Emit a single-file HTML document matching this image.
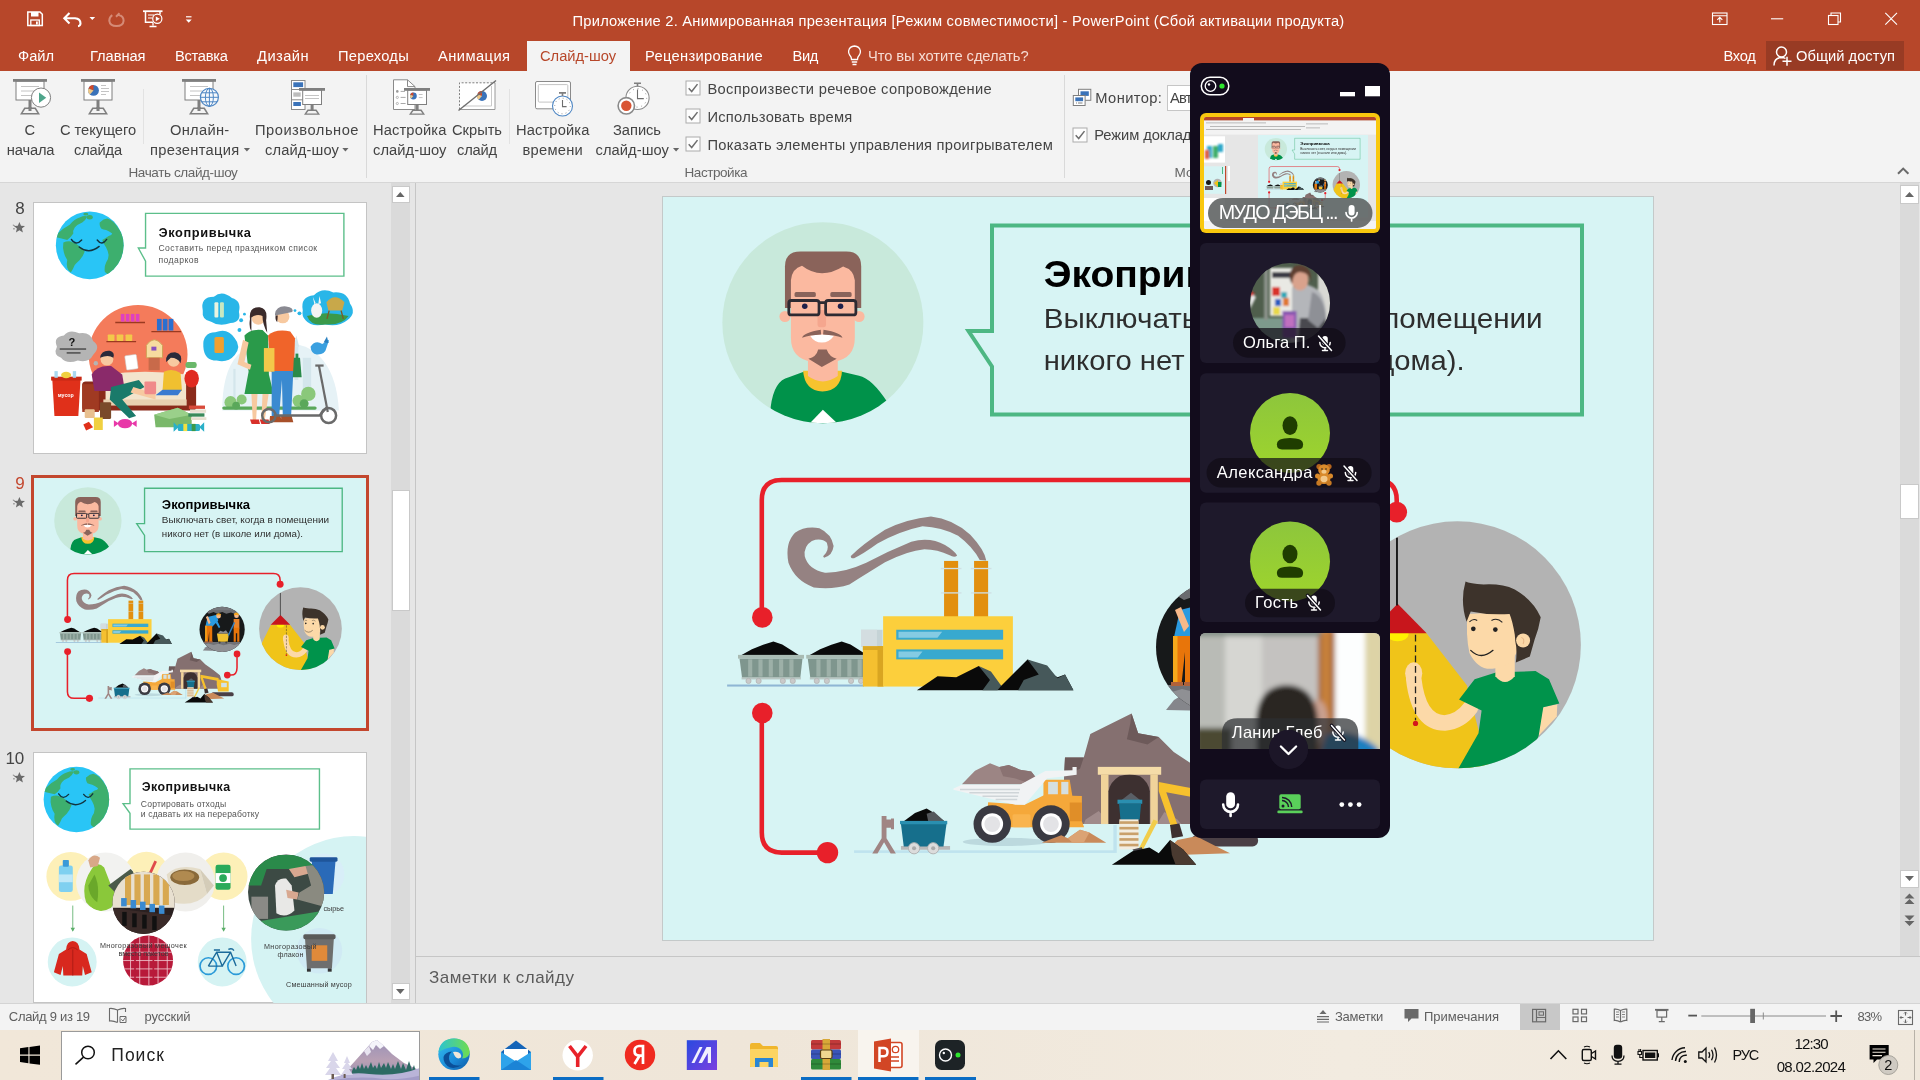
<!DOCTYPE html>
<html lang="ru"><head><meta charset="utf-8"><title>PowerPoint</title>
<style>
html,body{margin:0;padding:0;}
body{will-change:transform;width:1920px;height:1080px;overflow:hidden;position:relative;background:#e6e6e6;font-family:"Liberation Sans",sans-serif;}
.a{position:absolute;}
.t{position:absolute;white-space:nowrap;line-height:1;font-size:14.7px;color:#444;}
.w{color:#fff;}
svg{position:absolute;overflow:visible;}
#hdr{left:0;top:0;width:1920px;height:71px;background:#b7472a;}
#rib{left:0;top:71px;width:1920px;height:111px;background:#f3f3f3;border-bottom:1px solid #d6d6d6;}
.cb{position:absolute;width:13px;height:13px;border:1px solid #ababab;background:#fdfdfd;}
.r{font-size:14.7px;color:#444;}
.g{font-size:13.5px;color:#666;}
.s{font-size:13px;color:#5e5e5e;}
.sep{position:absolute;width:1px;background:#d9d9d9;}
</style></head><body>

<!--S9DEF-->
<svg width="0" height="0" style="position:absolute"><defs>
<symbol id="s9" viewBox="0 0 991 744" overflow="hidden">
 <rect width="991" height="744" fill="#d7f4f4"></rect>
 <!-- avatar -->
 <g transform="translate(48,14) scale(0.21296)">
  <clipPath id="avc"><circle cx="530" cy="529" r="472"></circle></clipPath>
  <circle cx="530" cy="529" r="472" fill="#c8e9db"></circle>
  <g clip-path="url(#avc)">
   <path d="M285 925 Q300 800 370 785 L440 760 L620 760 L700 778 Q760 790 835 905 L835 1010 L285 1010Z" fill="#00924a"></path>
   <path d="M437 755 L620 755 Q615 850 528 852 Q445 850 437 755Z" fill="#f7c32e"></path>
   <path d="M460 690 L600 690 L600 780 Q530 830 460 780Z" fill="#fbb9a0"></path>
   <path d="M470 1000 L530 938 L596 1000Z" fill="#fff"></path>
   <circle cx="352" cy="500" r="26" fill="#fbb9a0"></circle><circle cx="700" cy="500" r="26" fill="#fbb9a0"></circle>
   <path d="M352 460 L352 265 Q352 195 425 195 L640 195 Q710 195 710 265 L710 460Z" fill="#8a635a"></path>
   <path d="M380 330 Q385 275 432 262 Q520 330 625 265 Q675 280 680 330 L680 600 Q680 700 580 712 L480 712 Q380 700 380 600Z" fill="#fbb9a0"></path>
   <rect x="505" y="470" width="40" height="80" rx="12" fill="#f5a68e"></rect>
   <rect x="397" y="385" width="100" height="24" rx="8" fill="#8a635a"></rect><rect x="565" y="385" width="100" height="24" rx="8" fill="#8a635a"></rect>
   <circle cx="445" cy="452" r="13" fill="#20204a"></circle><circle cx="613" cy="452" r="13" fill="#20204a"></circle>
   <g fill="none" stroke="#2d2a32" stroke-width="13"><rect x="370" y="425" width="142" height="68" rx="12"></rect><rect x="543" y="425" width="142" height="68" rx="12"></rect><path d="M512 435H543"></path></g>
   <path d="M470 590 Q525 580 582 590 Q560 622 525 622 Q490 622 470 590Z" fill="#fff"></path>
   <path d="M432 600 Q440 575 520 562 L522 585 Q470 588 432 600Z M622 600 Q615 575 533 562 L531 585 Q585 588 622 600Z" fill="#8a635a"></path>
   <path d="M508 655 L548 655 Q560 690 595 698 L525 737 L462 698 Q500 690 508 655Z" fill="#8a635a"></path>
  </g>
 </g>
 <!-- callout -->
 <path d="M330 29.5 H920 V218.5 H330 V170.5 L306.5 135 H330 Z" fill="none" stroke="#4db783" stroke-width="4" stroke-linejoin="miter"></path>
 <!-- red connectors -->
 <g fill="none" stroke="#e8202a" stroke-width="4.6">
  <path d="M99.8 421 V304 Q99.8 284 119.8 284 H714.7 Q734.7 284 734.7 304 V316"></path>
  <path d="M99.8 517 V636.6 Q99.8 656.6 119.8 656.6 H165"></path>
  <path d="M606 524 V565 Q606 587 588 587 H577"></path>
 </g>
 <g fill="#e8202a"><circle cx="100.3" cy="421.4" r="10.3"></circle><circle cx="734.7" cy="316.2" r="10.4"></circle><circle cx="100.3" cy="517" r="10.3"></circle><circle cx="165.5" cy="656.6" r="10.7"></circle><circle cx="606" cy="524" r="10"></circle><circle cx="577" cy="587" r="10"></circle></g>
 <!-- factory -->
 <g transform="translate(58,304) scale(0.1875)">
  <path d="M550 300 Q585 270 570 228 Q540 200 490 218 Q445 245 452 300 Q470 370 560 388 Q660 390 780 335 Q900 270 1020 222 Q1120 195 1200 240 Q1250 270 1265 296 Q1250 310 1225 295 Q1160 262 1090 262 Q1000 270 880 332 Q770 400 690 450 Q600 480 500 466 Q400 430 365 335 Q345 230 400 175 Q450 138 530 150 Q595 180 606 245 Q600 295 555 308Z" fill="#958282"></path>
  <path d="M698 298 Q760 235 880 158 Q1000 100 1125 88 Q1240 100 1335 185 Q1410 265 1420 322 L1385 320 Q1350 250 1270 190 Q1180 145 1080 140 Q960 165 840 232 Q760 290 715 310 Q695 312 698 298Z" fill="#958282"></path>
  <rect x="38" y="984" width="730" height="11" fill="#8fb6d4"></rect>
  <g id="car">
   <path d="M115 826 L170 796 L230 772 L285 755 L332 770 L372 796 L420 826Z" fill="#0a0a0a"></path>
   <path d="M104 845 L440 845 L428 950 L118 950Z" fill="#7f968e"></path>
   <g fill="#9db0a8"><rect x="150" y="850" width="22" height="92"></rect><rect x="205" y="850" width="22" height="92"></rect><rect x="260" y="850" width="22" height="92"></rect><rect x="315" y="850" width="22" height="92"></rect><rect x="370" y="850" width="22" height="92"></rect></g>
   <rect x="96" y="826" width="352" height="20" fill="#a9bbb3"></rect>
   <rect x="115" y="945" width="316" height="12" fill="#b9c7c3"></rect>
   <g fill="#c9c9c9" stroke="#aaa" stroke-width="3"><circle cx="152" cy="965" r="14"></circle><circle cx="206" cy="965" r="14"></circle><circle cx="335" cy="965" r="14"></circle><circle cx="388" cy="965" r="14"></circle></g>
  </g>
  <use href="#car" x="364"></use>
  <rect x="752" y="692" width="115" height="90" fill="#c5d3d6"></rect><rect x="752" y="692" width="85" height="90" fill="#d3dde0"></rect>
  <rect x="762" y="780" width="110" height="215" fill="#f5c030"></rect><rect x="840" y="780" width="32" height="215" fill="#d9a521"></rect><rect x="762" y="780" width="110" height="20" fill="#dca822"></rect>
  <rect x="1195" y="325" width="75" height="300" fill="#e28f0e"></rect><rect x="1355" y="325" width="75" height="300" fill="#e28f0e"></rect>
  <g fill="#cfe0e4"><rect x="1178" y="362" width="110" height="7"></rect><rect x="1178" y="492" width="110" height="7"></rect><rect x="1338" y="362" width="110" height="7"></rect><rect x="1338" y="492" width="110" height="7"></rect></g>
  <rect x="870" y="620" width="692" height="375" fill="#fccf3c"></rect>
  <rect x="940" y="692" width="570" height="53" fill="#38a9cf"></rect><rect x="940" y="797" width="570" height="53" fill="#38a9cf"></rect>
  <path d="M952 703 H1185 L1160 735 H952Z M952 808 H1080 L1055 840 H952Z" fill="#85cbe3"></path>
  <path d="M1050 1015 L1160 940 L1260 945 L1380 885 L1430 935 L1500 990 L1640 850 L1700 880 L1800 945 L1840 930 L1885 1015Z" fill="#0a0a0a"></path>
  <path d="M1380 885 L1445 915 L1500 990 L1480 1015 L1400 1015 L1440 960Z M1640 850 L1745 882 L1800 950 L1840 930 L1885 1015 L1590 1015 L1620 960 L1700 930Z" fill="#46585a"></path>
 </g>
 <!-- mine -->
 <g transform="translate(178,494) scale(0.1875)">
  <path d="M1190 715 L1195 460 L1200 360 L1300 360 L1335 235 L1555 125 L1590 230 L1700 250 L1780 330 L1900 410 L2010 500 L2075 715Z" fill="#857070"></path>
  <path d="M1555 125 L1590 230 L1700 250 L1640 290 L1530 262 L1548 180Z M1200 360 L1300 360 L1280 420 L1195 460Z" fill="#6d5a5a"></path>
  <path d="M1300 715 L1310 690 L1380 645 L1440 715Z M1690 715 L1730 650 L1800 690 L1820 715Z" fill="#a08b8b"></path>
  <ellipse cx="880" cy="810" rx="225" ry="22" fill="#bcd9de"></ellipse>
  <rect x="75" y="855" width="1390" height="14" fill="#bfe3ee"></rect>
  <path d="M1458 869 L1458 720 L1476 720 L1476 869Z" fill="#bfe3ee"></path>
  <path d="M222 672 H248 V690 H272 V685 H288 V742 H272 V735 H248 V790 L298 872 H270 L235 812 L200 872 H172 L222 790Z" fill="#a08583"></path>
  <rect x="325" y="832" width="262" height="20" fill="#b8b8b8"></rect>
  <path d="M342 698 L400 656 L462 632 L500 655 L555 698Z" fill="#0a0a0a"></path><path d="M462 660 L500 648 L555 698 L470 698Z" fill="#55585c"></path>
  <path d="M325 715 L568 715 L552 834 L340 834Z" fill="#166f8c"></path><rect x="320" y="698" width="252" height="18" fill="#2a8fb0"></rect>
  <g fill="#dcdcdc" stroke="#b0b0b0" stroke-width="5"><circle cx="395" cy="844" r="30"></circle><circle cx="497" cy="844" r="30"></circle></g><g fill="#aaa"><circle cx="395" cy="844" r="11"></circle><circle cx="497" cy="844" r="11"></circle></g>
  <path d="M650 502 L720 430 L800 390 L850 410 L900 400 L960 425 L1020 435 L1048 470 L965 502Z" fill="#9c8584"></path>
  <path d="M850 410 L900 400 L960 425 L1020 435 L1048 470 L990 490 L930 470 L870 460Z" fill="#8a7272"></path>
  <path d="M790 598 L985 612 L1090 560 L1290 565 L1290 700 L1302 732 L780 732Z" fill="#f5a83a"></path>
  <path d="M1085 478 H1225 L1240 570 H1085Z" fill="#f5a83a"></path><rect x="1110" y="490" width="52" height="66" fill="#d5dfe0"></rect><rect x="1180" y="490" width="38" height="66" fill="#d5dfe0"></rect>
  <path d="M1225 600 H1290 V700 H1225Z" fill="#e08e28"></path><rect x="920" y="662" width="96" height="70" rx="8" fill="#f9b44e"></rect>
  <path d="M605 525 L650 505 L960 505 L1095 432 L1240 428 L1240 410 L1262 410 L1262 452 L1180 462 L1105 470 L985 612 L935 612 L605 532Z" fill="#f1f3f4"></path>
  <path d="M640 530 H960 M690 548 H955 M760 566 H950 M830 584 H945" stroke="#cfd5d8" stroke-width="8"></path>
  <g><circle cx="812" cy="715" r="100" fill="#3a3a42"></circle><circle cx="812" cy="715" r="58" fill="#fff"></circle><circle cx="812" cy="715" r="42" fill="#e3e3e6"></circle><circle cx="1125" cy="715" r="100" fill="#3a3a42"></circle><circle cx="1125" cy="715" r="58" fill="#fff"></circle><circle cx="1125" cy="715" r="42" fill="#e3e3e6"></circle></g>
  <path d="M1075 815 L1180 775 L1215 790 L1280 745 L1330 760 L1420 815Z" fill="#c98a5a"></path><path d="M1215 790 L1280 745 L1330 760 L1300 815 L1240 815Z" fill="#dba374"></path>
  <rect x="1375" y="410" width="338" height="42" fill="#f5dca8"></rect><rect x="1392" y="450" width="40" height="265" fill="#f0d39a"></rect><rect x="1655" y="450" width="40" height="265" fill="#f0d39a"></rect>
  <path d="M1432 715 L1432 540 Q1440 490 1490 460 Q1545 445 1600 460 Q1645 490 1652 540 L1652 715Z" fill="#3d3030"></path>
  <path d="M1500 588 L1552 548 L1602 588Z" fill="#5a5f66"></path><rect x="1480" y="585" width="132" height="22" fill="#2a8fb0"></rect><path d="M1488 605 H1606 L1598 692 H1496Z" fill="#166f8c"></path>
  <rect x="1490" y="690" width="102" height="160" fill="#f3ede0"></rect><g fill="#c9a06a"><rect x="1490" y="700" width="102" height="14"></rect><rect x="1490" y="730" width="102" height="14"></rect><rect x="1490" y="760" width="102" height="14"></rect><rect x="1490" y="790" width="102" height="14"></rect><rect x="1490" y="820" width="102" height="14"></rect></g>
  <!-- excavator -->
  <path d="M1700 490 L1990 545 L1985 590 L1740 545 L1800 720 L1765 728 L1700 540Z" fill="#f7c12d"></path>
  <path d="M1960 560 L2150 600 L2150 760 L1980 760 L1960 650Z" fill="#f7c12d"></path><rect x="2030" y="620" width="90" height="70" fill="#cfe3ea"></rect>
  <rect x="1875" y="772" width="355" height="62" rx="30" fill="#4a3f45"></rect>
  <path d="M1760 720 L1810 712 L1830 780 L1770 790Z" fill="#3d3030"></path>
  <path d="M1672 690 L1695 700 L1605 872 L1585 862Z" fill="#f1cd4a"></path><path d="M1560 850 L1610 838 L1622 880 L1590 900Z" fill="#4a4a50"></path>
  <path d="M1740 860 L1800 800 L1900 780 L2000 830 L2080 870 L1800 880Z" fill="#c98a5a"></path>
  <path d="M1450 932 L1560 860 L1650 840 L1700 870 L1760 800 L1830 850 L1900 932Z" fill="#0a0a0a"></path><path d="M1760 800 L1830 850 L1900 932 L1790 932 L1770 880Z" fill="#4a3a30"></path>
 </g>
 <!-- miners circle -->
 <g>
  <clipPath id="mnc"><circle cx="561.5" cy="451" r="67.5"></circle></clipPath>
  <path d="M504 514 L512 504 L522 498 L545 500 L552 515Z" fill="#85868b"></path>
  <circle cx="561.5" cy="451" r="67.5" fill="#17191a"></circle>
  <g clip-path="url(#mnc)">
   <rect x="480" y="378" width="160" height="18" fill="#77787c"></rect><path d="M490 396 l10 5 l12 -3 l10 6 l14 -5 l10 4 l16 -4 l12 5 l14 -4 l12 5 l12 -5 l10 3 V394 H490Z" fill="#6a6b6f"></path>
   <rect x="480" y="489" width="160" height="30" fill="#8f9094"></rect><path d="M480 489 h160 v5 l-12 3 l-14 -4 l-16 4 l-14 -3 l-18 4 l-16 -4 l-14 3 l-16 -4 l-14 4 l-12 -3 l-14 3z" fill="#707176"></path>
   <path d="M546 463 h36 l-4 25 h-28z" fill="#f2c230"></path><path d="M548 463 l8 -8 l9 3 l8 -5 l7 10z" fill="#8a8a8e"></path><circle cx="554" cy="490" r="3" fill="#444"></circle><circle cx="574" cy="490" r="3" fill="#444"></circle>
   <path d="M512 441 L518 414 L546 407 L550 424 L532 443Z" fill="#2a9ae0"></path>
   <path d="M511 488 V440 H532 V488 H523 V456 L519.500 488Z" fill="#e8750a"></path><path d="M511 488 V440 h4.500 V488z" fill="#f5a81c"></path>
   <rect x="509" y="486" width="12" height="4" fill="#b0623a"></rect><rect x="522" y="486" width="11" height="4" fill="#b0623a"></rect>
   <path d="M513 414 L519 411 L527 430 L522 436Z" fill="#f7b98a"></path>
   <circle cx="551" cy="411" r="7" fill="#f7b98a"></circle><path d="M543.500 409 a8 8 0 0 1 15.500 -1z" fill="#f5a623"></path>
   <path d="M545 421 L556 444 L552 447 L540 427Z" fill="#2a9ae0"></path>
   <path d="M596 420 h17 v28 h-17z" fill="#e8822a"></path><path d="M596 488 V446 h17 V488 h-6.500 V462 h-4 V488Z" fill="#e8750a"></path>
   <circle cx="604.500" cy="410" r="7" fill="#f7b98a"></circle><path d="M596.500 408 a8 8 0 0 1 16 0z" fill="#f5a623"></path>
   <path d="M597 428 L578 468 L582 470 L600 432Z" fill="#2e7fc4"></path>
  </g>
 </g>
 <!-- right circle: boy & lamp -->
 <g transform="translate(718,304) scale(0.2592)">
  <clipPath id="byc"><circle cx="298.5" cy="558.5" r="476.5"></circle></clipPath>
  <circle cx="298.5" cy="558.5" r="476.5" fill="#b3b3b3"></circle>
  <g clip-path="url(#byc)">
   <path d="M-42 512 L178 512 L335 715 L420 1040 L-300 1040Z" fill="#f0c419"></path>
   <ellipse cx="68" cy="518" rx="42" ry="27" fill="#fff200"></ellipse>
   <path d="M68 400 L180 514 L-44 514Z" fill="#c8161c"></path>
   <rect x="62" y="145" width="7" height="262" fill="#111"></rect>
   <path d="M628 800 L684 788 L682 835 L612 910Z" fill="#fcd9a8"></path>
   <path d="M130 690 Q150 860 250 860 Q310 855 350 800" fill="none" stroke="#fcd9a8" stroke-width="60" stroke-linecap="round"></path>
   <ellipse cx="130" cy="668" rx="33" ry="42" fill="#fcd9a8"></ellipse>
   <path d="M305 770 L365 692 L450 665 L600 660 L652 692 L692 785 L630 800 L612 910 L560 1040 L300 1040 L380 900 L392 812Z" fill="#00934b"></path>
   <path d="M445 600 H520 V680 Q482 725 445 680Z" fill="#fcd9a8"></path>
   
   <path d="M338 440 Q330 520 345 590 Q380 660 440 650 Q520 640 535 560 L540 430Z" fill="#fcd9a8"></path>
   <path d="M330 314 Q345 322 400 326 Q470 322 520 345 Q590 385 620 452 Q612 500 596 540 L578 604 L524 627 Q530 580 522 545 L520 520 Q512 470 500 440 Q420 445 350 430 L334 470 Q308 390 330 314Z" fill="#3d332b"></path>
   <circle cx="552" cy="542" r="27" fill="#fcd9a8"></circle><path d="M545 530 Q560 535 552 556" fill="none" stroke="#e8b888" stroke-width="4"></path>
   <path d="M137 520 V850" stroke="#222" stroke-width="5" stroke-dasharray="26 14"></path><circle cx="137" cy="862" r="10" fill="#d4161c"></circle>
   <circle cx="360" cy="497" r="9" fill="#222"></circle><circle cx="445" cy="500" r="9" fill="#222"></circle>
   <path d="M350 580 Q390 620 436 580" fill="none" stroke="#222" stroke-width="5" stroke-linecap="round"></path>
   <path d="M345 470 Q360 455 375 465 M430 465 Q452 452 472 472" fill="none" stroke="#222" stroke-width="4"></path>
  </g>
 </g>
 <!-- text -->
 <text x="381.7" y="91.4" font-family="Liberation Sans, sans-serif" font-weight="bold" font-size="36.5" fill="#000" textLength="263" lengthAdjust="spacingAndGlyphs">Экопривычка</text>
 <text x="381.7" y="132" font-family="Liberation Sans, sans-serif" font-size="28" fill="#2e2e2e" textLength="499" lengthAdjust="spacingAndGlyphs">Выключать свет, когда в помещении</text>
 <text x="381.7" y="173.6" font-family="Liberation Sans, sans-serif" font-size="28" fill="#2e2e2e" textLength="421" lengthAdjust="spacingAndGlyphs">никого нет (в школе или дома).</text>
</symbol>
</defs></svg>
<!--/S9DEF-->
<!-- ===== HEADER ===== -->
<div id="hdr" class="a"></div>
<div class="a" style="left:527px;top:41px;width:103px;height:31px;background:#f3f3f3;"></div>
<div class="a" style="left:1766px;top:41px;width:138px;height:29px;background:#983b24;"></div>

<div class="t w" style="left: 572.5px; top: 13.5px;  letter-spacing: 0.232px;">Приложение 2. Анимированная презентация [Режим совместимости] - PowerPoint (Сбой активации продукта)</div>

<div class="t w" style="left: 18px; top: 48.5px;  letter-spacing: -0.027px;">Файл</div>
<div class="t w" style="left: 90px; top: 48.5px;  letter-spacing: -0.058px;">Главная</div>
<div class="t w" style="left: 175px; top: 48.5px;  letter-spacing: -0.299px;">Вставка</div>
<div class="t w" style="left: 257px; top: 48.5px;  letter-spacing: 0.438px;">Дизайн</div>
<div class="t w" style="left: 338px; top: 48.5px;  letter-spacing: 0.264px;">Переходы</div>
<div class="t w" style="left: 438px; top: 48.5px;  letter-spacing: 0.443px;">Анимация</div>
<div class="t" style="left: 540px; top: 48.5px;  color: rgb(183, 71, 42); letter-spacing: -0.017px;">Слайд-шоу</div>
<div class="t w" style="left: 645px; top: 48.5px;  letter-spacing: 0.327px;">Рецензирование</div>
<div class="t w" style="left: 792.5px; top: 48.5px;  letter-spacing: -0.359px;">Вид</div>
<div class="t w" style="left: 868px; top: 48.5px;  color: rgb(246, 220, 212); letter-spacing: -0.085px;">Что вы хотите сделать?</div>
<div class="t w" style="left: 1723.5px; top: 48.5px;  letter-spacing: -0.309px;">Вход</div>
<div class="t w" style="left: 1796px; top: 48.5px;  letter-spacing: 0.026px;">Общий доступ</div>


<svg class="a" style="left:0;top:0" width="1920" height="71">
 <g fill="none" stroke="#fff" stroke-width="1.5">
  <path d="M27.800 12 H40 L42.300 14.300 V25.500 H27.800Z"></path><rect x="31" y="12" width="7.500" height="4.500" fill="#fff" stroke="none"></rect><rect x="30.800" y="20" width="8.500" height="5.500" stroke-width="1.300"></rect><rect x="36" y="21.500" width="1.800" height="3" fill="#fff" stroke="none"></rect>
  <path d="M69.500 13 L64.300 18.300 L69.500 23.600 M64.800 18.300 H75 Q80.500 18.800 80.500 23.500 Q80.300 26 78 26.200" stroke-width="2.100"></path>
  <path d="M119.500 13.200 L116 16.800 M118.500 15 Q123.600 16 123.600 20.800 Q123 26 116.500 26 Q110 26 109.300 20.800 Q109.300 17 112.300 15.200" stroke="#d58b77" stroke-width="2"></path>
  <path d="M143 11.200 H162.500" stroke-width="1.800"></path><path d="M145.500 12 V22.300 H153"></path><path d="M160 12 V14.500"></path><path d="M148 15 H154 M148 18 H152" stroke-width="1"></path><circle cx="157.300" cy="18.800" r="4.600" stroke-width="1.200"></circle><path d="M155.800 16.400 L159.800 18.800 L155.800 21.200Z" fill="#fff" stroke="none"></path><path d="M153 22.500 V25.500 M149.500 26.500 H156.500" stroke-width="1.300"></path>
  <path d="M186 16.800 H191.500" stroke-width="1.200"></path>
 </g>
 <path d="M89.500 17 h5.600 l-2.800 3z M185.700 19.500 h6 l-3 3.300z" fill="#fff"></path>
 <!-- lightbulb -->
 <g fill="none" stroke="#fff" stroke-width="1.300"><path d="M851.500 59.500 Q851.500 57 849.800 55.300 Q848.300 53.300 848.600 51 Q849.500 46.300 854.500 46 Q859.500 46.300 860.400 51 Q860.700 53.300 859.200 55.300 Q857.500 57 857.500 59.500Z"></path><path d="M851.800 62 H857.200 M852.500 64.500 H856.500"></path></g>
 <!-- share person -->
 <g fill="none" stroke="#fff" stroke-width="1.500"><circle cx="1781.500" cy="52" r="5"></circle><path d="M1774 65.500 Q1774 58 1781 57.500 Q1784 57.500 1785.500 58.500"></path><path d="M1782.500 61.300 H1791.500 M1787 56.800 V65.800"></path></g>
 <!-- window controls -->
 <g fill="none" stroke="#fff" stroke-width="1.100">
  <rect x="1712.500" y="13" width="14.500" height="11.500"></rect><path d="M1712.500 15.800 H1727 M1719.800 22.500 V17.500 M1717.300 19.800 L1719.800 17.300 L1722.300 19.800"></path>
  <path d="M1771 18.800 H1783.200"></path>
  <rect x="1828.500" y="15.500" width="9.500" height="9"></rect><path d="M1831 15.500 V13 H1840.500 V22 H1838"></path>
  <path d="M1885.300 12.800 L1897 24.600 M1897 12.800 L1885.300 24.600"></path>
 </g>
</svg>
<!-- ===== RIBBON ===== -->
<div id="rib" class="a"></div>
<svg width="0" height="0" style="position:absolute">
 <defs>
  <g id="stand"><!-- big presentation stand, origin = top-left of top bar, 34 wide -->
   <rect x="3" y="2" width="28" height="19" fill="#fff" stroke="#7f7f7f" stroke-width="1"></rect>
   <rect x="0" y="0" width="34" height="2.8" fill="#7f7f7f"></rect>
   <rect x="15.5" y="21" width="3" height="9" fill="#7f7f7f"></rect>
   <path d="M11.3 28.5 L22.7 28.5 L27 35.5 L7 35.5 Z" fill="#7f7f7f"></path>
   <path d="M12.3 30 L21.7 30 L24.3 34 L9.7 34 Z" fill="#f3f3f3"></path>
   <rect x="15.5" y="28" width="3" height="4" fill="#7f7f7f"></rect>
  </g>
  <g id="sstand"><!-- small stand, 26 wide -->
   <rect x="3.7" y="2" width="18.8" height="14.5" fill="#fff" stroke="#7f7f7f" stroke-width="1"></rect>
   <rect x="0" y="0" width="26" height="2.8" fill="#7f7f7f"></rect>
   <rect x="11.6" y="16.5" width="3" height="6.5" fill="#7f7f7f"></rect>
   <path d="M8.5 21.5 L17.5 21.5 L21 26.8 L5 26.8 Z" fill="#7f7f7f"></path>
   <path d="M9.4 23 L16.6 23 L18.5 25.5 L7.5 25.5 Z" fill="#f3f3f3"></path>
  </g>
  <g id="pie"><!-- r=5.4 at 0,0 -->
   <circle r="5.4" fill="#3b73b9"></circle>
   <path d="M0 0 L0 -5.4 A5.4 5.4 0 0 0 -5 -2 Z" fill="#d04a2b"></path>
   <path d="M0 0 L-5 -2 A5.4 5.4 0 0 0 -3.6 4 Z" fill="#f0c987"></path>
  </g>
  <g id="chk"><path d="M3.2 7.8 L6.2 11 L12 3.6" fill="none" stroke="#6e6e6e" stroke-width="1.5"></path></g>
 </defs>
</svg>
<svg class="a" style="left:0;top:0" width="1200" height="190">
 <!-- 1: С начала -->
 <use href="#stand" x="13" y="79"></use>
 <g stroke="#c4c4c4" stroke-width="1"><path d="M21 86.5H39M21 91H39M21 95.5H33"></path></g>
 <circle cx="41" cy="97.6" r="9.6" fill="#fff" stroke="#7f7f7f" stroke-width="1"></circle>
 <path d="M39 92.6 L46.2 97.8 L39 103 Z" fill="#4fa58b"></path>
 <!-- 2: С текущего -->
 <use href="#stand" x="81" y="79"></use>
 <use href="#pie" x="93.5" y="90.4"></use>
 <g stroke="#c4c4c4" stroke-width="1"><path d="M101 85.5H106M101 88.5H109M101 91.5H109M101 94.5H106"></path></g>
 <!-- 3: Онлайн -->
 <use href="#stand" x="182" y="79"></use>
 <g stroke="#c4c4c4" stroke-width="1"><path d="M190 86.5H208M190 91H202M190 95.5H200"></path></g>
 <circle cx="209.4" cy="97.3" r="9" fill="#f6f9fc" stroke="#4f87c4" stroke-width="1.2"></circle>
 <g fill="none" stroke="#4f87c4" stroke-width="1"><ellipse cx="209.4" cy="97.3" rx="4" ry="9"></ellipse><path d="M200.4 97.3H218.4M209.4 88.3V106.3M201.6 92.8H217.2M201.6 101.8H217.2"></path></g>
 <!-- 4: Произвольное -->
 <rect x="291.5" y="80.5" width="13.5" height="29" fill="#fff" stroke="#8a8a8a"></rect>
 <path d="M291.5 89.5H305M291.5 99.8H305" stroke="#8a8a8a"></path>
 <rect x="293.3" y="82.3" width="9.8" height="4.8" fill="#3b73b9"></rect>
 <rect x="293.3" y="92.4" width="7.4" height="4.3" fill="#bdbdbd"></rect>
 <rect x="293.3" y="102" width="7.6" height="4" fill="#3b73b9"></rect>
 <use href="#sstand" x="299" y="88"></use>
 <g stroke="#c4c4c4" stroke-width="1"><path d="M305 95.5H319M305 98.5H319"></path></g>
 <!-- 5: Настройка слайд-шоу -->
 <path d="M393.5 79.8 H407.5 L415 86.6 V109.5 H393.5 Z" fill="#fff" stroke="#8a8a8a"></path>
 <path d="M407.5 79.8 V86.6 H415" fill="none" stroke="#8a8a8a"></path>
 <circle cx="397.3" cy="91.4" r="1.3" fill="#9a9a9a"></circle><circle cx="397.3" cy="97.4" r="1.1" fill="#fff" stroke="#9a9a9a" stroke-width=".7"></circle><circle cx="397.3" cy="103.5" r="1.1" fill="#fff" stroke="#9a9a9a" stroke-width=".7"></circle>
 <path d="M400.6 91.4H405M400.6 97.4H405.6M400.6 103.5H405.6" stroke="#a8a8a8"></path>
 <use href="#sstand" x="404" y="88"></use>
 <g transform="translate(413.4 96) scale(.63)"><use href="#pie"></use></g>
 <path d="M418.8 94.5H422.6M418.8 97.6H422.6" stroke="#c4c4c4"></path>
 <!-- 6: Скрыть слайд -->
 <rect x="459.5" y="82.8" width="35.5" height="26.8" fill="#fff"></rect>
 <path d="M459.5 109.5 V82.8 H495" fill="none" stroke="#7f7f7f" stroke-width="1" stroke-dasharray="2 1.6"></path>
 <path d="M459.5 109.5 H495 V82.8" fill="none" stroke="#9a9a9a" stroke-width="1"></path>
 <path d="M463 106 H491.5 V86" fill="none" stroke="#c9c9c9" stroke-width="1"></path>
 <g transform="translate(482 96) scale(.93)"><use href="#pie"></use></g>
 <path d="M458.5 110.5 L496 80.5" stroke="#6e6e6e" stroke-width="1.4"></path>
 <!-- 7: Настройка времени -->
 <rect x="535.5" y="81.5" width="35" height="27.3" rx="1.5" fill="#fff" stroke="#8a8a8a"></rect>
 <rect x="538.3" y="84.6" width="29.5" height="17.5" rx="1" fill="#fff" stroke="#c4c4c4"></rect>
 <circle cx="562.5" cy="106" r="10" fill="#fff" stroke="#4f87c4" stroke-width="1.1"></circle>
 <path d="M559 92.9 H566 M562.5 93 V96" stroke="#7f7f7f" stroke-width="1.6" fill="none"></path>
 <path d="M562.5 100 V106.6 H566.6" stroke="#6e6e6e" stroke-width="1.1" fill="none"></path>
 <circle cx="562.5" cy="106" r="7.8" fill="none" stroke="#8a8a8a" stroke-width="1" stroke-dasharray=".9 3.18"></circle>
 <!-- 8: Запись -->
 <circle cx="637.5" cy="97.9" r="11.6" fill="#fff" stroke="#8a8a8a" stroke-width="1.1"></circle>
 <path d="M634 83.3 H641 M637.5 83.5 V86.6" stroke="#7f7f7f" stroke-width="1.6" fill="none"></path>
 <path d="M637.5 89.5 V98.6 H643.8" stroke="#6e6e6e" stroke-width="1.1" fill="none"></path>
 <circle cx="637.5" cy="97.9" r="9.2" fill="none" stroke="#8a8a8a" stroke-width="1" stroke-dasharray=".9 3.9"></circle>
 <circle cx="626.3" cy="105.8" r="8.2" fill="#fff" stroke="#8a8a8a" stroke-width="1.6"></circle>
 <circle cx="626.3" cy="105.8" r="5.2" fill="#d95433"></circle>
 <!-- dropdown arrows -->
 <g fill="#666"><path d="M243.8 148 h6.2 l-3.1 3.4z"></path><path d="M342.3 148 h6.2 l-3.1 3.4z"></path><path d="M673 148 h6.2 l-3.1 3.4z"></path></g>
 <!-- checks -->
 <g fill="#fdfdfd" stroke="#ababab"><rect x="686" y="81" width="14" height="14"></rect><rect x="686" y="109" width="14" height="14"></rect><rect x="686" y="137" width="14" height="14"></rect><rect x="1073" y="128" width="14" height="14"></rect></g>
 <use href="#chk" x="685.5" y="80.5"></use><use href="#chk" x="685.5" y="108.5"></use><use href="#chk" x="685.5" y="136.5"></use><use href="#chk" x="1072.5" y="127.5"></use>
 <!-- monitor icon -->
 <rect x="1078.5" y="89.3" width="12.3" height="11" fill="#fff" stroke="#7f7f7f"></rect><rect x="1080.5" y="91.3" width="8.3" height="4.6" fill="#3b73b9"></rect>
 <rect x="1073.3" y="95.5" width="11.8" height="10" fill="#fff" stroke="#7f7f7f"></rect><rect x="1075.3" y="97.4" width="7.8" height="3.8" fill="#3b73b9"></rect><path d="M1076 103H1077M1078 103H1082.5" stroke="#7f7f7f"></path>
 <!-- collapse caret -->
</svg>
<div class="sep" style="left:143px;top:89px;height:55px;background:#e2e2e2"></div>
<div class="sep" style="left:366px;top:75px;height:103px;"></div>
<div class="sep" style="left:509px;top:89px;height:55px;background:#e2e2e2"></div>
<div class="sep" style="left:1064px;top:75px;height:103px;"></div>
<div class="a" style="left:1167px;top:85px;width:60px;height:26px;background:#fff;border:1px solid #c6c6c6;box-sizing:border-box"></div>

<div class="t r" style="left: 24.5px; top: 122.6px;  letter-spacing: 0.891px;">С</div>
<div class="t r" style="left: 6.8px; top: 142.6px;  letter-spacing: -0.172px;">начала</div>
<div class="t r" style="left: 60px; top: 122.6px;  letter-spacing: -0.066px;">С текущего</div>
<div class="t r" style="left: 74px; top: 142.6px;  letter-spacing: -0.172px;">слайда</div>
<div class="t r" style="left: 170px; top: 122.6px;  letter-spacing: 0.288px;">Онлайн-</div>
<div class="t r" style="left: 150px; top: 142.6px;  letter-spacing: 0.307px;">презентация</div>
<div class="t r" style="left: 255px; top: 122.6px;  letter-spacing: 0.5px;">Произвольное</div>
<div class="t r" style="left: 265px; top: 142.6px;  letter-spacing: 0.123px;">слайд-шоу</div>
<div class="t r" style="left: 373px; top: 122.6px;  letter-spacing: 0.132px;">Настройка</div>
<div class="t r" style="left: 373px; top: 142.6px;  letter-spacing: 0.068px;">слайд-шоу</div>
<div class="t r" style="left: 452px; top: 122.6px;  letter-spacing: -0.023px;">Скрыть</div>
<div class="t r" style="left: 457px; top: 142.6px;  letter-spacing: -0.172px;">слайд</div>
<div class="t r" style="left: 516px; top: 122.6px;  letter-spacing: 0.132px;">Настройка</div>
<div class="t r" style="left: 522.5px; top: 142.6px;  letter-spacing: 0.252px;">времени</div>
<div class="t r" style="left: 613px; top: 122.6px;  letter-spacing: -0.034px;">Запись</div>
<div class="t r" style="left: 595.5px; top: 142.6px;  letter-spacing: 0.068px;">слайд-шоу</div>
<div class="t r" style="left: 707.5px; top: 81.6px;  letter-spacing: 0.326px;">Воспроизвести речевое сопровождение</div>
<div class="t r" style="left: 707.5px; top: 109.6px;  letter-spacing: 0.234px;">Использовать время</div>
<div class="t r" style="left: 707.5px; top: 137.6px;  letter-spacing: 0.233px;">Показать элементы управления проигрывателем</div>
<div class="t r" style="left: 1095.3px; top: 91.4px;  letter-spacing: 0.391px;">Монитор:</div>
<div class="t r" style="left: 1170px; top: 91.4px;  letter-spacing: -0.839px;">Авт</div>
<div class="t r" style="left: 1094.3px; top: 128.3px;  letter-spacing: -0.083px;">Режим доклад</div>
<div class="t g" style="left: 128.5px; top: 166px;  letter-spacing: -0.386px;">Начать слайд-шоу</div>
<div class="t g" style="left: 684.5px; top: 166px;  letter-spacing: -0.441px;">Настройка</div>
<div class="t g" style="left:1174.5px;top:166px;">Мо</div>
<svg class="a" style="left:1897px;top:167px" width="12" height="8"><path d="M1 6.800 L6.200 1.600 L11.400 6.800" fill="none" stroke="#6a6a6a" stroke-width="2"></path></svg>

<!-- ===== LEFT PANEL FRAME ===== -->
<div class="a" style="left:391px;top:183px;width:19px;height:820px;background:#dadada;"></div>
<div class="a" style="left:414.5px;top:183px;width:1px;height:820px;background:#c6c6c6;"></div>
<div class="a" style="left:391.5px;top:185.5px;width:18px;height:17.5px;background:#fff;border:1px solid #c9c9c9;box-sizing:border-box"></div>
<div class="a" style="left:391.5px;top:489.5px;width:18px;height:121px;background:#fff;border:1px solid #c9c9c9;box-sizing:border-box"></div>
<div class="a" style="left:391.5px;top:982.5px;width:18px;height:17.5px;background:#fff;border:1px solid #c9c9c9;box-sizing:border-box"></div>
<svg class="a" style="left:0;top:0" width="420" height="1010">
 <path d="M396 197 l4.3 -5 l4.3 5z M396 989 l4.3 5 l4.3 -5z" fill="#666"></path>
 <g fill="#6a6a6a"><path id="star" d="M19.4 222 l1.6 3.7 4 .3 -3.1 2.6 1 3.9 -3.5 -2.2 -3.5 2.2 1 -3.9 -3.1 -2.6 4 -.3z M13 224.6 l1.8 .8 l-.3 .7 l-1.8 -.8z M13 228.4 h1.900 v.8 h-1.900z"></path><use href="#star" y="275"></use><use href="#star" y="550"></use></g>
</svg>
<div class="t" style="left:15.2px;top:200.3px;font-size:17px;color:#444;">8</div>
<div class="t" style="left:15.2px;top:475.3px;font-size:17px;color:#c3472e;">9</div>
<div class="t" style="left:5.5px;top:750.3px;font-size:17px;color:#444;letter-spacing:-.3px">10</div>

<!-- thumbnails -->
<div class="a" id="th8" style="left:33px;top:202px;width:334px;height:252px;background:#fff;border:1px solid #c4c4c4;box-sizing:border-box;overflow:hidden"></div>
<div class="a" style="left:31px;top:475px;width:338px;height:256px;background:#c3472e;"></div>
<div class="a" id="th9" style="left:34px;top:478px;width:332px;height:250px;background:#d7f4f4;overflow:hidden"><svg style="left:0;top:0" width="332" height="250"><use href="#s9" width="332" height="250"></use></svg></div>
<div class="a" id="th10" style="left:33px;top:752px;width:334px;height:251px;background:#fff;border:1px solid #c4c4c4;box-sizing:border-box;overflow:hidden"></div>

<!--TH-->
<svg class="a" style="left:0;top:0" width="420" height="1010">
 <defs>
  <clipPath id="c8"><rect x="34" y="203" width="332" height="249"></rect></clipPath>
  <clipPath id="c10"><rect x="34" y="753" width="332" height="250"></rect></clipPath>
  <g id="earth"><!-- r=122 at 0,0 in zoom units -->
   <circle r="122" fill="#29c5f6"></circle>
   <clipPath id="ec"><circle r="122"></circle></clipPath>
   <g clip-path="url(#ec)" fill="#3daf6e">
    <path d="M-125 -35 L-113 -44 Q-95 -62 -72 -74 Q-55 -95 -36 -100 Q-20 -108 -9 -104 Q-15 -90 -27 -82 Q-45 -75 -54 -64 Q-62 -52 -59 -42 Q-68 -28 -81 -19 Q-100 -25 -125 -30Z"></path>
    <ellipse cx="0" cy="-101" rx="11" ry="8"></ellipse><ellipse cx="-14" cy="-112" rx="9" ry="5"></ellipse>
    <path d="M36 -82 Q50 -95 63 -96 Q82 -90 95 -73 Q112 -52 122 -28 L126 26 Q120 60 108 80 Q96 100 81 108 Q62 106 54 94 Q52 76 59 62 Q68 50 68 35 Q66 20 59 8 Q50 -6 45 -19 Q56 -24 68 -33 Q80 -36 81 -42 Q70 -50 59 -55 Q48 -56 41 -60 Q34 -70 36 -82Z"></path>
    <path d="M-95 -10 Q-82 -16 -68 -14 Q-50 -8 -36 4 Q-24 12 -18 22 Q-24 40 -36 53 Q-46 62 -54 71 Q-60 86 -68 98 Q-78 92 -81 80 Q-84 66 -81 53 Q-90 40 -93 26 Q-98 8 -95 -10Z"></path>
   </g>
   <g fill="none" stroke="#12343f" stroke-width="5" stroke-linecap="round"><path d="M-66 -21 Q-50 4 -29 -19"></path><path d="M27 -19 Q44 4 61 -21"></path><path d="M-38 6 Q-2 34 34 4"></path></g>
  </g>
 </defs>
 <!-- ============ thumb 8 ============ -->
 <g clip-path="url(#c8)"><g transform="translate(0,180) scale(0.27778)">
  <use href="#earth" x="323" y="235"></use>
  <path d="M524 120 H1238 V346 H524 V292 L498 245 H524Z" fill="#fff" stroke="#5cbf8a" stroke-width="5"></path>
  <!-- left scene -->
  <circle cx="497" cy="628" r="178" fill="#f47b5b"></circle>
  <g stroke="#9a3a20" stroke-width="5"><path d="M415 513 H522 M545 546 H652 M383 582 H490"></path></g>
  <g fill="#e040c0"><rect x="435" y="482" width="13" height="28"></rect><rect x="453" y="482" width="13" height="28"></rect><rect x="471" y="482" width="13" height="28"></rect><rect x="489" y="482" width="13" height="28"></rect></g>
  <g fill="#2a6fd0"><rect x="565" y="500" width="17" height="42"></rect><rect x="586" y="500" width="17" height="42"></rect><rect x="607" y="500" width="17" height="42"></rect></g>
  <g fill="#f3c84a"><rect x="388" y="556" width="24" height="24" rx="3"></rect><rect x="420" y="556" width="24" height="24" rx="3"></rect><rect x="452" y="556" width="24" height="24" rx="3"></rect></g>
  <path d="M527 640 V595 Q555 555 585 595 V640Z" fill="#f7dca0" stroke="#c8a050" stroke-width="3"></path><rect x="545" y="600" width="18" height="14" fill="#8a50c0"></rect><rect x="535" y="640" width="40" height="45" fill="#c86a4a"></rect>
  <path d="M205 600 Q190 565 230 560 Q250 535 285 552 Q325 545 335 580 Q365 600 335 630 Q320 660 280 650 Q240 665 220 640 Q190 630 205 600Z" fill="#b4b4b4"></path><circle cx="345" cy="660" r="8" fill="#b4b4b4"></circle>
  <text x="247" y="598" font-family="Liberation Sans, sans-serif" font-weight="bold" font-size="40" fill="#111">?</text><rect x="215" y="606" width="95" height="5" fill="#444"></rect><rect x="240" y="620" width="50" height="5" fill="#444"></rect>
  <rect x="296" y="725" width="410" height="105" rx="12" fill="#8a2a1a"></rect><rect x="296" y="735" width="60" height="100" fill="#a03a22"></rect>
  <path d="M380 700 Q520 680 670 700 V795 H380Z" fill="#f3e4cc"></path><rect x="372" y="790" width="300" height="22" fill="#e8d0b0"></rect>
  <ellipse cx="690" cy="715" rx="26" ry="32" fill="#e02a20"></ellipse>
  <path d="M330 700 Q350 665 400 670 L440 700 L450 760 H340Z" fill="#8a2a6a"></path>
  <circle cx="385" cy="645" r="23" fill="#f7c9a0"></circle><path d="M360 640 Q365 612 395 615 Q415 620 408 640 Q390 628 360 640Z" fill="#2a2a3a"></path>
  <path d="M400 745 L500 720 L520 745 L440 790 L490 850 L465 858 L395 790Z" fill="#1a7a6a"></path>
  <rect x="452" y="630" width="42" height="52" rx="4" transform="rotate(-8 473 655)" fill="#fff" stroke="#ccc" stroke-width="2"></rect>
  <path d="M590 690 Q620 675 650 695 L655 760 H585Z" fill="#f0c030"></path>
  <circle cx="625" cy="650" r="22" fill="#f7c9a0"></circle><path d="M598 655 Q595 620 630 620 Q660 625 650 660 Q640 640 615 640 Q605 650 598 655Z" fill="#2a2a3a"></path>
  <path d="M585 755 H655 L640 775 H560Z" fill="#3a7ad0"></path><path d="M560 770 L480 745 L470 765 L560 790Z" fill="#f7c9a0"></path>
  <rect x="520" y="725" width="42" height="46" rx="4" fill="#f08a8a"></rect>
  <path d="M188 715 H290 L282 850 H196Z" fill="#e0301a"></path><rect x="184" y="708" width="110" height="14" fill="#c82a16"></rect>
  <g fill="#a8d8f0"><rect x="196" y="688" width="12" height="24"></rect><rect x="262" y="688" width="12" height="24"></rect></g><ellipse cx="238" cy="702" rx="18" ry="12" fill="#f0d040"></ellipse>
  <text x="208" y="782" font-family="Liberation Sans, sans-serif" font-weight="bold" font-size="19" fill="#fff">мусор</text>
  <rect x="305" y="825" width="36" height="32" rx="4" fill="#e8c090"></rect><rect x="360" y="800" width="40" height="60" rx="4" fill="#7a4a2a"></rect><rect x="338" y="855" width="32" height="45" fill="#f0d040"></rect><path d="M300 880 l20 -10 l15 20 l-25 12z" fill="#e0301a"></path>
  <ellipse cx="450" cy="877" rx="26" ry="17" fill="#e838a8"></ellipse><path d="M410 865 l18 12 l-18 12z M492 865 l-18 12 l18 12z" fill="#e838a8"></path>
  <path d="M555 845 L640 820 L690 845 V890 H560Z" fill="#7ab86a"></path><path d="M555 845 L640 820 L690 845 L610 860Z" fill="#9ad08a"></path>
  <g><rect x="680" y="812" width="58" height="12" fill="#d84a3a"></rect><rect x="684" y="826" width="58" height="12" fill="#e8e0d0"></rect><rect x="678" y="840" width="58" height="12" fill="#3a8a5a"></rect><rect x="688" y="854" width="55" height="10" fill="#e8e0d0"></rect></g>
  <rect x="640" y="878" width="80" height="26" rx="6" fill="#2ab0c8"></rect><rect x="660" y="878" width="14" height="26" fill="#f0e040"></rect><rect x="690" y="878" width="14" height="26" fill="#3a9a4a"></rect><path d="M625 872 l18 18 l-18 16z M735 872 l-18 18 l18 16z" fill="#2ab0c8"></path>
  <rect x="668" y="655" width="40" height="22" rx="8" fill="#6ab86a"></rect>
  <!-- right scene -->
  <path d="M800 830 Q800 640 900 600 Q1000 570 1100 600 Q1210 650 1220 830Z" fill="#e6f2f6"></path>
  <g fill="#d4e6ec"><rect x="1060" y="600" width="14" height="120"></rect><rect x="1090" y="640" width="30" height="120"></rect><rect x="840" y="680" width="8" height="130"></rect><path d="M1067 560 l10 40 h-20z"></path></g>
  <path d="M730 470 Q720 420 770 420 Q800 395 835 425 Q870 435 860 475 Q870 510 830 515 Q790 530 760 510 Q725 505 730 470Z" fill="#29b6e8"></path>
  <rect x="772" y="440" width="14" height="55" rx="4" fill="#e8f4e0"></rect><rect x="792" y="440" width="14" height="55" rx="4" fill="#c8e8c0"></rect>
  <circle cx="868" cy="505" r="7" fill="#29b6e8"></circle><circle cx="880" cy="483" r="5" fill="#29b6e8"></circle>
  <path d="M732 600 Q728 550 775 548 Q820 530 845 570 Q870 600 845 630 Q820 660 780 650 Q735 650 732 600Z" fill="#29b6e8"></path>
  <rect x="772" y="565" width="34" height="58" rx="6" fill="#f0a030"></rect><circle cx="862" cy="540" r="7" fill="#29b6e8"></circle>
  <path d="M1090 470 Q1080 420 1130 415 Q1160 385 1200 405 Q1250 400 1260 445 Q1285 480 1250 505 Q1220 530 1170 520 Q1120 530 1100 505 Q1085 490 1090 470Z" fill="#29b6e8"></path>
  <path d="M1105 490 Q1170 470 1255 490 Q1230 525 1170 520 Q1120 528 1105 490Z" fill="#3a9a4a"></path>
  <ellipse cx="1140" cy="470" rx="20" ry="26" fill="#f4f4f4"></ellipse><path d="M1132 448 l-6 -28 l10 22z M1146 446 l4 -28 l6 26z" fill="#f4f4f4"></path>
  <path d="M1175 440 Q1205 405 1240 440 L1232 470 H1182Z" fill="#c8a84a"></path><path d="M1185 470 l-8 30 M1228 470 l8 30" stroke="#7a5a2a" stroke-width="5"></path>
  <circle cx="1078" cy="480" r="7" fill="#29b6e8"></circle><circle cx="1062" cy="470" r="5" fill="#29b6e8"></circle>
  <g fill="#8ac87a"><circle cx="830" cy="800" r="22"></circle><circle cx="870" cy="790" r="18"></circle><circle cx="1075" cy="795" r="22"></circle><circle cx="1110" cy="770" r="26"></circle></g><g fill="#5aa85a"><circle cx="850" cy="812" r="14"></circle><circle cx="1095" cy="805" r="16"></circle><rect x="800" y="815" width="340" height="12" rx="6"></rect></g>
  <path d="M880 560 Q900 535 945 540 L965 560 L968 700 L985 770 H880 L895 690Z" fill="#2a9a4a"></path>
  <circle cx="930" cy="497" r="24" fill="#f7c9a0"></circle><path d="M900 500 Q895 455 935 458 Q965 462 958 505 L962 550 Q945 520 945 490 Q925 480 905 495 L905 545 Q895 530 900 500Z" fill="#3a2a2a"></path>
  <path d="M905 770 h22 l-5 95 h-12z M945 770 h22 l-14 95 h-12z" fill="#f7c9a0"></path><path d="M900 862 h32 l4 16 h-30z M935 862 h32 l4 16 h-30z" fill="#d8302a"></path>
  <path d="M875 575 l20 10 l-15 70 l25 10 l-5 18 l-45 -20z" fill="#f7c9a0"></path>
  <path d="M965 560 Q990 535 1045 545 L1062 570 L1058 690 H975Z" fill="#f0642a"></path>
  <circle cx="1018" cy="492" r="24" fill="#f7c9a0"></circle><path d="M990 482 Q995 452 1030 455 Q1060 460 1052 475 L990 488Z" fill="#8a8a92"></path><path d="M992 488 Q990 505 998 512 L1000 488Z" fill="#3a2a2a"></path>
  <path d="M978 688 H1056 L1048 850 H1018 L1015 720 L1005 850 H978Z" fill="#3a8ad0"></path><path d="M972 850 h38 l4 22 h-44z M1012 850 h38 l6 22 h-44z" fill="#a8502a"></path>
  <rect x="950" y="605" width="38" height="85" fill="#f3c84a"></rect>
  <path d="M1058 640 h22 l6 70 h-32z" fill="#2a8a4a"></path><rect x="1064" y="625" width="10" height="18" fill="#2a8a4a"></rect>
  <path d="M1118 600 Q1135 575 1160 590 L1185 575 L1175 605 Q1170 630 1140 628 Q1120 625 1118 600Z" fill="#3aa0e0"></path><path d="M1165 585 l12 -22 l6 24z" fill="#2a80c0"></path>
  <g fill="none" stroke="#6a6a6a"><path d="M1148 668 L1180 835" stroke-width="8"></path><path d="M1135 668 h30" stroke-width="8"></path><path d="M985 848 H1150 L1175 820" stroke-width="9"></path><circle cx="968" cy="848" r="24" stroke-width="9"></circle><circle cx="1183" cy="848" r="27" stroke-width="9"></circle></g>
 </g></g>
 <!-- ============ thumb 10 ============ -->
 <g clip-path="url(#c10)"><g transform="translate(0,730) scale(0.27778)">
  <circle cx="1274" cy="752" r="370" fill="#d5f3f3"></circle>
  <g transform="translate(275,250) scale(.967)"><use href="#earth"></use></g>
  <path d="M468 140 H1150 V357 H468 V300 L443 265 H468Z" fill="#fff" stroke="#5cbf8a" stroke-width="5"></path>
  <circle cx="255" cy="527" r="88" fill="#fdf0b8"></circle><circle cx="527" cy="520" r="82" fill="#fdf0b8"></circle><circle cx="805" cy="527" r="86" fill="#fdf0b8"></circle>
  <rect x="212" y="488" width="50" height="95" rx="8" fill="#7fd0f0"></rect><rect x="226" y="468" width="22" height="24" rx="3" fill="#3a9ad8"></rect><rect x="212" y="520" width="50" height="28" fill="#bfe8f8"></rect>
  <rect x="545" y="470" width="10" height="50" transform="rotate(25 550 495)" fill="#e04a4a"></rect>
  <rect x="776" y="485" width="54" height="90" rx="8" fill="#2aaa5a"></rect><rect x="776" y="515" width="54" height="36" fill="#fff"></rect><circle cx="803" cy="533" r="14" fill="#2aaa5a"></circle>
  <path d="M262 632 V722 M805 632 V722" stroke="#5cae6a" stroke-width="3"></path><path d="M254 712 l8 14 l8 -14z M797 712 l8 14 l8 -14z" fill="#5cae6a"></path>
  <circle cx="260" cy="835" r="88" fill="#d5f3f3"></circle><circle cx="800" cy="835" r="88" fill="#d5f3f3"></circle>
  <path d="M238 790 Q240 762 262 760 Q284 762 286 790 L312 806 L330 872 L306 882 L298 850 L296 884 H228 L226 850 L218 882 L194 872 L212 806Z" fill="#d8281e"></path><path d="M262 790 V884" stroke="#a81a14" stroke-width="3"></path><path d="M244 792 Q262 775 280 792" fill="none" stroke="#a81a14" stroke-width="3"></path>
  <g fill="none" stroke="#2a9ad8" stroke-width="6"><circle cx="750" cy="850" r="30"></circle><circle cx="850" cy="850" r="30"></circle><path d="M750 850 L780 800 H830 L850 850 M780 800 L800 850 H750 M830 800 L800 850 M770 792 h22 M822 790 q14 -6 20 4" stroke="#1a6a9a" stroke-width="5"></path></g>
  <!-- photo circles -->
  <clipPath id="p1"><circle cx="380" cy="547" r="106"></circle></clipPath>
  <circle cx="380" cy="547" r="106" fill="#f2f2f0"></circle>
  <g clip-path="url(#p1)"><path d="M330 500 Q350 470 375 495 L400 560 Q430 600 400 640 Q350 670 310 620 Q290 560 330 500Z" fill="#8ac83a"></path><path d="M340 520 Q360 560 350 620 Q320 600 318 560Z" fill="#6aa82a"></path><path d="M318 470 Q335 440 360 460 L352 490 L325 495Z" fill="#d8a888"></path><path d="M390 560 L470 500 L490 520 L420 590Z" fill="#4a5a4a"></path></g>
  <clipPath id="p3"><circle cx="668" cy="547" r="106"></circle></clipPath>
  <circle cx="668" cy="547" r="106" fill="#f0efec"></circle>
  <g clip-path="url(#p3)"><path d="M600 520 Q640 480 720 500 L745 590 Q700 640 620 620Z" fill="#e4dcc8"></path><ellipse cx="665" cy="530" rx="52" ry="28" fill="#8a6a3a"></ellipse><ellipse cx="660" cy="526" rx="40" ry="18" fill="#b08a50"></ellipse><path d="M720 500 L770 560 L745 590Z" fill="#d4ccb8"></path></g>
  <clipPath id="p2"><circle cx="517" cy="622" r="112"></circle></clipPath>
  <circle cx="517" cy="622" r="112" fill="#2a2020"></circle>
  <g clip-path="url(#p2)"><rect x="400" y="500" width="240" height="140" fill="#e8e0d0"></rect><g fill="#d8a850"><rect x="450" y="520" width="22" height="110"></rect><rect x="484" y="520" width="22" height="110"></rect><rect x="518" y="520" width="22" height="110"></rect><rect x="552" y="520" width="22" height="110"></rect><rect x="586" y="520" width="22" height="110"></rect></g><g fill="#3a8ad0"><rect x="436" y="605" width="20" height="30"></rect><rect x="470" y="612" width="20" height="30"></rect><rect x="504" y="618" width="20" height="30"></rect><rect x="538" y="626" width="20" height="30"></rect><rect x="572" y="632" width="20" height="30"></rect></g><path d="M400 640 L640 670 V740 H400Z" fill="#3a2a28"></path><g fill="#111"><rect x="440" y="655" width="16" height="50"></rect><rect x="476" y="660" width="16" height="50"></rect><rect x="512" y="665" width="16" height="50"></rect><rect x="548" y="670" width="16" height="50"></rect></g></g>
  <clipPath id="p4"><circle cx="533" cy="830" r="90"></circle></clipPath>
  <circle cx="533" cy="830" r="90" fill="#b81a3a"></circle>
  <g clip-path="url(#p4)" stroke="#f0c8d0" stroke-width="3"><path d="M440 770 H630 M440 800 H630 M440 830 H630 M440 860 H630 M440 890 H630 M470 740 V920 M503 740 V920 M536 740 V920 M569 740 V920 M602 740 V920"></path><g stroke="#b81a3a" stroke-width="6"><path d="M486 740 V920 M552 740 V920"></path></g></g>
  <!-- bins -->
  <circle cx="1165" cy="520" r="75" fill="#d8eef8"></circle><path d="M1122 470 H1208 L1198 590 H1132Z" fill="#2a6ab8"></path><rect x="1115" y="458" width="100" height="16" rx="5" fill="#1f559a"></rect>
  <circle cx="1150" cy="795" r="82" fill="#d0eaf4"></circle><path d="M1098 750 H1202 L1195 858 H1105Z" fill="#6e6e6e"></path><rect x="1092" y="735" width="116" height="18" rx="6" fill="#5a5a5a"></rect><rect x="1122" y="775" width="56" height="56" fill="#e08a3a"></rect><rect x="1105" y="858" width="14" height="12" fill="#333"></rect><rect x="1180" y="858" width="14" height="12" fill="#333"></rect>
  <clipPath id="p5"><circle cx="1030" cy="585" r="137"></circle></clipPath>
  <circle cx="1030" cy="585" r="137" fill="#3c4a44"></circle>
  <g clip-path="url(#p5)"><path d="M890 450 H1170 V500 H960 L940 560 H890Z" fill="#2a8a4a"></path><rect x="905" y="600" width="60" height="80" fill="#8a8a86"></rect><path d="M920 690 L1170 650 V730 H900Z" fill="#3a9a5a"></path><path d="M990 560 Q1000 530 1030 535 L1050 560 L1060 650 Q1030 680 995 660Z" fill="#e8e8e6"></path><path d="M1040 500 L1100 490 L1120 515 L1060 530Z M1030 575 L1075 585 L1070 610 L1035 605Z" fill="#d8a890"></path><path d="M1100 490 L1180 480 V640 L1070 610 L1078 585 L1120 560Z" fill="#8a8a80"></path></g>
 </g></g>
</svg>
<div class="t" style="left: 158.5px; top: 227.4px; font-size: 12.8px; font-weight: bold; color: rgb(17, 17, 17);  letter-spacing: 0.607px;">Экопривычка</div>
<div class="t" style="left: 158.5px; top: 244.2px; font-size: 8.6px; color: rgb(85, 85, 85);  letter-spacing: 0.384px;">Составить перед праздником список</div>
<div class="t" style="left: 158.5px; top: 255.8px; font-size: 8.6px; color: rgb(85, 85, 85);  letter-spacing: 0.434px;">подарков</div>
<div class="t" style="left: 141.7px; top: 781.1px; font-size: 12.4px; font-weight: bold; color: rgb(17, 17, 17);  letter-spacing: 0.493px;">Экопривычка</div>
<div class="t" style="left: 140.8px; top: 799.6px; font-size: 8.6px; color: rgb(85, 85, 85);  letter-spacing: 0.181px;">Сортировать отходы</div>
<div class="t" style="left: 140.8px; top: 809.6px; font-size: 8.6px; color: rgb(85, 85, 85);  letter-spacing: 0.141px;">и сдавать их на переработку</div>
<div class="t" style="left: 100px; top: 942.1px; font-size: 7.2px; color: rgb(58, 58, 58);  letter-spacing: 0.352px;">Многоразовый мешочек</div>
<div class="t" style="left: 118.5px; top: 949.9px; font-size: 7.2px; color: rgb(58, 58, 58);  letter-spacing: -0.099px;">вместо пакетов</div>
<div class="t" style="left: 264px; top: 943.3px; font-size: 7.2px; color: rgb(58, 58, 58);  letter-spacing: 0.371px;">Многоразовый</div>
<div class="t" style="left: 277.5px; top: 951px; font-size: 7.2px; color: rgb(58, 58, 58);  letter-spacing: 0.143px;">флакон</div>
<div class="t" style="left:323.500px;top:904.600px;font-size:7.200px;color:#3a3a3a;">сырье</div>
<div class="t" style="left: 286px; top: 980.8px; font-size: 7.2px; color: rgb(58, 58, 58);  letter-spacing: 0.185px;">Смешанный мусор</div>
<!--/TH-->

<!-- ===== MAIN AREA ===== -->
<div class="a" style="left:1900px;top:183px;width:19px;height:773px;background:#dadada;"></div>
<div class="a" style="left:1900px;top:185px;width:19px;height:18.5px;background:#fff;border:1px solid #c9c9c9;box-sizing:border-box"></div>
<div class="a" style="left:1900px;top:483.5px;width:19px;height:35px;background:#fff;border:1px solid #c9c9c9;box-sizing:border-box"></div>
<div class="a" style="left:1900px;top:869.5px;width:19px;height:18.5px;background:#fff;border:1px solid #c9c9c9;box-sizing:border-box"></div>
<svg class="a" style="left:1900px;top:183px" width="20" height="780"><g fill="#666"><path d="M5 14 l4.5 -5 l4.5 5z M5 693 l4.5 5 l4.5 -5z"></path><path d="M4.5 715.5 l5 -5 l5 5z M4.5 721 l5 -5 l5 5z M4.5 732.5 l5 5 l5 -5z M4.5 738 l5 5 l5 -5z"></path></g></svg>
<div class="a" id="slide" style="left:662px;top:196px;width:992px;height:745px;background:#d7f4f4;border:1px solid #c4c9c9;box-sizing:border-box;overflow:hidden"><svg style="left:-1px;top:-1px" width="991" height="744"><use href="#s9" width="991" height="744"></use></svg></div>
<div class="a" style="left:415px;top:955.5px;width:1505px;height:1px;background:#c6c6c6;"></div>
<div class="t" style="left: 429px; top: 968.5px; font-size: 17px; color: rgb(90, 90, 90);  letter-spacing: 0.487px;">Заметки к слайду</div>

<!--VP-->
<!-- ===== VIDEO PANEL ===== -->
<div class="a" id="vp" style="left:1190px;top:63px;width:200px;height:775px;background:#120c1c;border-radius:12px;"></div>
<svg class="a" style="left:0;top:0" width="1920" height="1080">
 <defs>
  <g id="micoff" fill="none" stroke="#fff" stroke-width="1.5" stroke-linecap="round"><rect x="5.2" y="1" width="5.6" height="9" rx="2.8" fill="#fff" stroke="none"></rect><path d="M2.8 7.5 A5.2 5.2 0 0 0 13.2 7.5 M8 12.8 V15.5 M5.5 15.5 H10.5"></path><path d="M1.5 1 L14.5 15.5" stroke="#14101c" stroke-width="3.6"></path><path d="M1.5 1 L14.5 15.5"></path></g>
  <g id="person" fill="#1f3d00"><ellipse cx="0" cy="-7.400" rx="7.500" ry="9.300"></ellipse><path d="M-13.100 11.500 Q-13.100 5.100 0 5.100 Q13.100 5.100 13.100 11.500 Q13.100 16.400 8 16.400 H-8 Q-13.100 16.400 -13.100 11.500Z"></path></g><linearGradient id="avg" x1="0" y1="0" x2="0" y2="1"><stop offset="0" stop-color="#8dc63c"></stop><stop offset="1" stop-color="#9fd52c"></stop></linearGradient>
  <filter id="bl1"><feGaussianBlur stdDeviation="1.2"></feGaussianBlur></filter>
  <filter id="bl2"><feGaussianBlur stdDeviation="2.5"></feGaussianBlur></filter>
  <clipPath id="t1c"><rect x="1204" y="117" width="172" height="112" rx="2"></rect></clipPath>
  <clipPath id="t5c"><path d="M1200 639 Q1200 633 1206 633 H1374 Q1380 633 1380 639 V749 H1200Z"></path></clipPath>
  <clipPath id="olc"><circle cx="1290" cy="303" r="40"></circle></clipPath>
 </defs>
 <!-- camera logo -->
 <rect x="1201.3" y="77.3" width="27.5" height="17.5" rx="8.7" fill="none" stroke="#fff" stroke-width="1.5"></rect>
 <circle cx="1210.5" cy="86" r="5.3" fill="none" stroke="#fff" stroke-width="1.3"></circle><circle cx="1209" cy="84.5" r="1.2" fill="#fff"></circle>
 <circle cx="1222" cy="86" r="2.6" fill="#2ee62e"></circle>
 <rect x="1340" y="92" width="15" height="4.3" fill="#fff"></rect><rect x="1365" y="86" width="15" height="10.3" fill="#fff"></rect>
 <!-- tile 1 -->
 <rect x="1200" y="113" width="180" height="120" rx="6" fill="#f9c80e"></rect>
 <g clip-path="url(#t1c)">
  <rect x="1204" y="117" width="172" height="112" fill="#e6e6e6"></rect>
  <rect x="1204" y="117" width="172" height="3.6" fill="#b7472a"></rect><rect x="1243" y="118" width="11" height="3" fill="#f3f3f3"></rect>
  <rect x="1204" y="120.6" width="172" height="14" fill="#f3f3f3"></rect>
  <g fill="#9a9a9a" opacity=".8"><rect x="1206" y="122.5" width="60" height=".8"></rect><rect x="1210" y="126" width="95" height=".8"></rect><rect x="1206" y="129" width="95" height=".8"></rect><rect x="1306" y="123.5" width="22" height=".8"></rect><rect x="1306" y="127.5" width="14" height=".8"></rect></g>
  <rect x="1204" y="136.3" width="21" height="26.3" fill="#fff"></rect><g filter="url(#bl1)"><rect x="1207" y="146" width="5" height="12" fill="#2fa7c9"></rect><rect x="1213" y="146" width="5" height="12" fill="#3fae6a"></rect><rect x="1218" y="144" width="5" height="8" fill="#2fa7c9"></rect><rect x="1205" y="150" width="4" height="9" fill="#e05a3a"></rect></g>
  <rect x="1204" y="166.3" width="21" height="27.5" fill="#d7f4f4"></rect><rect x="1225" y="166" width="1.2" height="28" fill="#c3472e"></rect><rect x="1222" y="167" width="1" height="7" fill="#4db783"></rect>
  <circle cx="1217.500" cy="183" r="4.3" fill="#b3b3b3"></circle><path d="M1214 183 l4 -3 v7z" fill="#f0c419"></path><rect x="1218" y="182" width="3.4" height="5" fill="#00934b"></rect><circle cx="1208.500" cy="182.500" r="2.500" fill="#17191a"></circle><rect x="1205" y="186" width="8" height="4" fill="#6d5a5a"></rect>
  <rect x="1204" y="198" width="21" height="31" fill="#fff"></rect>
  <rect x="1228" y="166" width="2" height="15" fill="#fff"></rect>
  <use href="#s9" x="1258" y="135" width="110" height="82.6"></use>
  <rect x="1204" y="221" width="172" height="8" fill="#f3f3f3"></rect>
 </g>
 <rect x="1208" y="198" width="164.500" height="30" rx="15" fill="#5c6060" fill-opacity=".88"></rect>
 <g transform="translate(1344,204)" fill="none" stroke="#fff" stroke-width="1.7" stroke-linecap="round"><rect x="4.600" y="1" width="6" height="10.5" rx="3" fill="#fff" stroke="none"></rect><path d="M2 8.5 A5.6 5.6 0 0 0 13.2 8.5 M7.6 14.200 V17"></path></g>
 <!-- tile 2 -->
 <rect x="1200" y="243" width="180" height="120" rx="6" fill="#1e192b"></rect>
 <g clip-path="url(#olc)">
  <rect x="1250" y="263" width="80" height="80" fill="#4f5e4c"></rect>
  <g filter="url(#bl1)">
   <rect x="1250" y="318" width="80" height="25" fill="#7d9a8c"></rect>
   <rect x="1318" y="263" width="14" height="80" fill="#d9d9d4"></rect>
   <rect x="1270" y="268" width="23" height="48" fill="#e9e9e4"></rect>
   <rect x="1264" y="268" width="4" height="52" fill="#8a928a"></rect>
   <path d="M1250 292 l6 5 l-6 12z" fill="#e8e8e8"></path><path d="M1250 290 l5 4 l-5 3z" fill="#d03030"></path>
   <rect x="1272" y="272" width="19" height="6" fill="#3a3a44"></rect>
   <rect x="1272" y="287" width="8" height="9" fill="#d8302c"></rect><rect x="1281" y="292" width="6" height="6" fill="#30a8b8"></rect><rect x="1275" y="299" width="6" height="7" fill="#2c5cc0"></rect><rect x="1283" y="298" width="6" height="8" fill="#e07830"></rect><rect x="1273" y="307" width="7" height="8" fill="#e8d848"></rect>
   <path d="M1292 288 Q1305 280 1318 290 Q1328 300 1326 330 L1322 343 H1290 L1292 310Z" fill="#b4b6ba"></path>
   <path d="M1300 318 h26 v25 h-28z" fill="#4a4a50"></path>
   <path d="M1312 292 Q1324 296 1326 318 L1318 328 L1308 320Z" fill="#8e9096"></path>
   <ellipse cx="1300" cy="280" rx="8.500" ry="10.500" fill="#d9a28c"></ellipse>
   <path d="M1290 280 Q1288 266 1300 265 Q1312 266 1311 282 Q1309 272 1300 272 Q1293 272 1292 284Z" fill="#5e4032"></path>
   <rect x="1282.500" y="311" width="14" height="27" fill="#8a58b0"></rect><rect x="1285" y="315" width="9" height="12" fill="#c070c0"></rect>
  </g>
 </g>
 <rect x="1233" y="328" width="112.600" height="29.700" rx="14.850" fill="#0f0b16" fill-opacity=".7"></rect>
 <use href="#micoff" x="1317" y="335"></use>
 <!-- tile 3 -->
 <rect x="1200" y="373.300" width="180" height="119.400" rx="6" fill="#1e192b"></rect>
 <circle cx="1290" cy="433" r="40" fill="url(#avg)"></circle><use href="#person" x="1290" y="433"></use>
 <rect x="1206.600" y="458" width="165" height="29.500" rx="14.750" fill="#0f0b16" fill-opacity=".7"></rect>
 <use href="#micoff" x="1342.500" y="465"></use>
 <g transform="translate(1314,463)"><circle cx="5" cy="3.500" r="2.600" fill="#b5651d"></circle><circle cx="15" cy="3.500" r="2.600" fill="#b5651d"></circle><circle cx="10" cy="7" r="5.800" fill="#d98a2b"></circle><ellipse cx="10" cy="15.500" rx="6.500" ry="5.500" fill="#d98a2b"></ellipse><ellipse cx="10" cy="16" rx="3.500" ry="3.300" fill="#f3c98a"></ellipse><ellipse cx="10" cy="8.800" rx="2.600" ry="2" fill="#f3c98a"></ellipse><circle cx="3.500" cy="13" r="2.500" fill="#d98a2b"></circle><circle cx="16.500" cy="13" r="2.500" fill="#d98a2b"></circle><circle cx="5" cy="20" r="2.700" fill="#c77a22"></circle><circle cx="15" cy="20" r="2.700" fill="#c77a22"></circle><circle cx="8" cy="6" r=".8" fill="#222"></circle><circle cx="12" cy="6" r=".8" fill="#222"></circle></g>
 <!-- tile 4 -->
 <rect x="1200" y="502.600" width="180" height="119.400" rx="6" fill="#1e192b"></rect>
 <circle cx="1290" cy="561.400" r="40" fill="url(#avg)"></circle><use href="#person" x="1290" y="561.400"></use>
 <rect x="1245" y="588.700" width="90" height="28.500" rx="14.250" fill="#0f0b16" fill-opacity=".7"></rect>
 <use href="#micoff" x="1306" y="594.500"></use>
 <!-- tile 5 webcam -->
 <g clip-path="url(#t5c)">
  <rect x="1200" y="633" width="180" height="116" fill="#c9c9c5"></rect>
  <g filter="url(#bl2)">
   <rect x="1196" y="630" width="60" height="125" fill="#b9bbb6"></rect><rect x="1225" y="630" width="40" height="125" fill="#d6d6d2"></rect><rect x="1262" y="630" width="58" height="125" fill="#c4c2c0"></rect>
   <rect x="1318" y="630" width="18" height="125" fill="#a8662e"></rect><rect x="1322" y="630" width="8" height="125" fill="#c8823e"></rect>
   <rect x="1335" y="630" width="32" height="125" fill="#fdfefe"></rect><rect x="1365" y="630" width="18" height="125" fill="#ddd3a6"></rect>
   <rect x="1196" y="630" width="125" height="6" fill="#7a8a80"></rect>
   <rect x="1196" y="728" width="36" height="26" fill="#4c4a32"></rect>
   <path d="M1325 735 Q1350 725 1378 748 V756 H1320Z" fill="#1f7fc0"></path>
   <ellipse cx="1318" cy="722" rx="10" ry="22" fill="#c9a090"></ellipse>
   <path d="M1256 756 V722 Q1257 686 1287 685 Q1316 686 1318 722 V756Z" fill="#2a2622"></path>
  </g>
 </g>
 <path d="M1237.300 718.200 H1343 Q1358.300 718.200 1358.300 734 V749 H1221.900 V734 Q1221.900 718.200 1237.300 718.200Z" fill="#2c2f32" fill-opacity=".72"></path>
 <use href="#micoff" x="1330" y="724.500"></use>
 <circle cx="1288.600" cy="749.500" r="19.500" fill="#1c1628"></circle>
 <path d="M1281 746.500 L1288.600 754 L1296.200 746.500" fill="none" stroke="#fff" stroke-width="2.300" stroke-linecap="round" stroke-linejoin="round"></path>
 <!-- toolbar -->
 <rect x="1200" y="779.400" width="180" height="49.600" rx="6" fill="#1e192b"></rect>
 <g fill="none" stroke="#fff" stroke-width="2.600" stroke-linecap="round"><rect x="1226.200" y="792.300" width="8.800" height="16" rx="4.400" fill="#fff" stroke="none"></rect><path d="M1223.200 804.500 A7.400 7.400 0 0 0 1238 804.500 M1230.600 812.500 V816"></path></g>
 <rect x="1279.300" y="794.300" width="21.400" height="15" rx="1.800" fill="#5ad05a"></rect><rect x="1277.300" y="810.600" width="25.400" height="2.600" rx="1.300" fill="#5ad05a"></rect>
 <g fill="none" stroke="#1e192b" stroke-width="1.500"><path d="M1282 800.600 a6.500 6.500 0 0 1 6.500 6.500 M1282 797.400 a9.700 9.700 0 0 1 9.700 9.700"></path></g><circle cx="1283" cy="806.100" r="1.500" fill="#1e192b"></circle>
 <g fill="#fff"><circle cx="1341.800" cy="804.600" r="2.400"></circle><circle cx="1350.400" cy="804.600" r="2.400"></circle><circle cx="1359.100" cy="804.600" r="2.400"></circle></g>
</svg>
<div class="t w" style="left: 1218.8px; top: 203.3px; font-size: 19.7px;  letter-spacing: -1.615px;">МУДО ДЭБЦ ...</div>
<div class="t w" style="left: 1243px; top: 334px; font-size: 16.5px;  letter-spacing: 0.096px;">Ольга П.</div>
<div class="t w" style="left: 1216.8px; top: 464.1px; font-size: 16.5px;  letter-spacing: 0.427px;">Александра</div>
<div class="t w" style="left: 1255px; top: 594px; font-size: 16.5px;  letter-spacing: 0.416px;">Гость</div>
<div class="a" style="left:1221.900px;top:718px;width:136.400px;height:31px;overflow:hidden"><div class="t w" style="left: 9.9px; top: 5.5px; font-size: 16.5px;  letter-spacing: 0.289px;">Ланин Глеб</div></div>
<div class="a" style="left:1269.100px;top:730px;width:39px;height:39px;border-radius:50%;background:#1c1628;"></div>
<svg class="a" style="left:1269.100px;top:730px" width="39" height="39"><path d="M11.900 16.500 L19.500 24 L27.100 16.500" fill="none" stroke="#fff" stroke-width="2.300" stroke-linecap="round" stroke-linejoin="round"></path></svg>
<!--/VP-->
<!--BT-->
<!-- ===== STATUS BAR ===== -->
<div class="a" style="left:0;top:1003px;width:1920px;height:27px;background:#f3f3f3;border-top:1px solid #d4d4d4;box-sizing:border-box"></div>
<div class="a" style="left:1520px;top:1004px;width:40px;height:26px;background:#c8c8c8;"></div>
<div class="t s" style="left: 8.8px; top: 1010px;  letter-spacing: -0.293px;">Слайд 9 из 19</div>
<div class="t s" style="left: 144.5px; top: 1010px;  letter-spacing: -0.094px;">русский</div>
<div class="t s" style="left: 1335px; top: 1010px;  letter-spacing: -0.248px;">Заметки</div>
<div class="t s" style="left: 1424px; top: 1010px;  letter-spacing: -0.006px;">Примечания</div>
<div class="t s" style="left: 1857.5px; top: 1010px;  letter-spacing: -0.677px;">83%</div>
<svg class="a" style="left:0;top:1003px" width="1920" height="28">
 <g fill="none" stroke="#6a6a6a" stroke-width="1.1">
  <path d="M117.5 7 V19.5 M117.5 7 Q113 5 109.500 5.500 V18 Q113 17.500 117.500 19.500 M117.500 7 Q122 5 125.500 5.500 V9"></path>
  <path d="M120 13.500 h6 v6 h-6z M121.300 16.300 l1.600 1.700 l2.600 -3.600" stroke-width="1"></path>
 </g>
 <g stroke="#6a6a6a" stroke-width="1.200"><path d="M1317 13.600 H1329 M1317 16.300 H1329 M1317 19 H1329"></path></g><path d="M1319.500 11 l3.500 -4 l3.500 4z" fill="#6a6a6a"></path>
 <path d="M1404.500 6 h14 v9.500 h-7 l-3.500 3.500 v-3.500 h-3.500z" fill="#6a6a6a"></path>
 <g fill="none" stroke="#6a6a6a" stroke-width="1.200">
  <rect x="1532.600" y="6.400" width="13" height="12.400"></rect><path d="M1536.500 6.400 V18.800 M1536.500 14.500 H1545.600"></path><rect x="1539" y="8.800" width="4.500" height="3.400" stroke-width="1"></rect>
  <rect x="1573" y="6.300" width="5" height="4.600"></rect><rect x="1581.500" y="6.300" width="5" height="4.600"></rect><rect x="1573" y="14" width="5" height="4.600"></rect><rect x="1581.500" y="14" width="5" height="4.600"></rect>
  <path d="M1620.500 7.500 V19 M1620.500 7.500 Q1617 5.600 1614.300 6.200 V17.500 Q1617 17 1620.500 19 M1620.500 7.500 Q1624 5.600 1626.800 6.200 V17.500 Q1624 17 1620.500 19"></path>
  <path d="M1616 9 h3 M1616 11.500 h3 M1616 14 h3 M1622 9 h3 M1622 11.500 h3 M1622 14 h3" stroke-width=".8"></path>
  <path d="M1655 6.800 H1668.500" stroke-width="1.800"></path><rect x="1657" y="7.500" width="9.600" height="6.600"></rect><path d="M1661.800 14 V18 M1658.800 18.700 H1664.800"></path>
 </g>
 <path d="M1688.300 12.600 H1697" stroke="#555" stroke-width="1.800"></path>
 <path d="M1701.300 13 H1826" stroke="#8a8a8a" stroke-width="1"></path><path d="M1763.300 9.500 V16.500" stroke="#8a8a8a" stroke-width="1"></path>
 <rect x="1750.200" y="5.800" width="4.800" height="14.200" fill="#666"></rect>
 <path d="M1830.400 13 H1842 M1836.200 7.400 V18.900" stroke="#555" stroke-width="1.800"></path>
 <g fill="none" stroke="#6a6a6a" stroke-width="1.100"><rect x="1898.500" y="7.500" width="14" height="14"></rect><path d="M1905.500 9 v3.500 M1905.500 20 v-3.500 M1900 14.500 h3.500 M1911 14.500 h-3.500"></path><path d="M1904 10.500 l1.500 -1.500 l1.500 1.500 M1904 18.500 l1.500 1.500 l1.500 -1.500 M1901.500 13 l-1.500 1.500 l1.500 1.500 M1909.500 13 l1.500 1.500 l-1.500 1.500" stroke-width=".9"></path></g>
</svg>

<!-- ===== TASKBAR ===== -->
<div class="a" id="tb" style="left:0;top:1030px;width:1920px;height:50px;background:linear-gradient(90deg,#f1e7d9 0%,#efe6d9 40%,#f2ebe0 70%,#f0e8dc 100%);"></div>
<div class="a" style="left:858px;top:1030px;width:60.500px;height:50px;background:#f8f4ee;"></div>
<div class="a" style="left:61px;top:1030.500px;width:358.500px;height:50px;background:#fff;border:1px solid #9a9a9a;box-sizing:border-box;overflow:hidden">
 <svg style="left:262px;top:5px" width="98" height="45" viewBox="0 0 98 45">
  <defs><linearGradient id="mtg" x1="0" y1="0" x2="0" y2="1"><stop offset="0" stop-color="#9a92b8"></stop><stop offset=".5" stop-color="#b8a0b4"></stop><stop offset="1" stop-color="#8d88b0"></stop></linearGradient></defs>
  <path d="M22 34 L40 14 L48 5 L53 3 L60 9 L68 17 L80 26 L97 34 V45 H10Z" fill="url(#mtg)"></path>
  <path d="M48 5 L53 3 L60 9 L56 12 L52 8 L49 13 L45 9Z" fill="#f4f4fa"></path><path d="M40 14 L45 9 L47 15 L43 19Z" fill="#e8e4f0"></path>
  <path d="M28 34 l2 -4 l2 3 l2 -5 l2 4 l2 -6 l2 6 l2 -4 l2 4 l3 -7 l2 6 l2 -3 l2 4 l2 -7 l2 6 l3 -5 l2 5 l2 -6 l3 7 l2 -5 l2 5 l3 -8 l3 8 l2 -6 l3 7 l3 -9 l3 9 l2 -5 l2 7 v8 H28Z" fill="#2d6a64"></path>
  <path d="M0 45 Q20 34 45 37 Q75 40 98 30 V45Z" fill="#b9b4d8"></path><path d="M0 45 Q30 38 60 42 Q80 43 98 38 V45Z" fill="#a39dc8"></path>
  <g fill="#d9d6ea"><path d="M9 38 l-8 0 l5 -7 l-4 0 l5 -7 l-3 0 l5 -9 l5 9 l-3 0 l5 7 l-4 0 l5 7z"></path><path d="M23 38 l-6 0 l4 -6 l-3 0 l4 -6 l-2 0 l3 -7 l3 7 l-2 0 l4 6 l-3 0 l4 6z"></path></g>
  <rect x="7.500" y="37" width="2.500" height="5" fill="#6a5a50"></rect><rect x="19.600" y="37" width="2" height="4" fill="#6a5a50"></rect>
 </svg>
</div>
<div class="t" style="left: 111.3px; top: 1046.7px; font-size: 17.5px; color: rgb(34, 34, 34);  letter-spacing: 1px;">Поиск</div>
<div class="t" style="left: 1732.5px; top: 1048.1px; font-size: 14.5px; color: rgb(17, 17, 17);  letter-spacing: -1.182px;">РУС</div>
<div class="t" style="left: 1794.6px; top: 1035.6px; font-size: 15px; color: rgb(17, 17, 17);  letter-spacing: -0.909px;">12:30</div>
<div class="t" style="left: 1776.7px; top: 1058.8px; font-size: 15px; color: rgb(17, 17, 17);  letter-spacing: -0.658px;">08.02.2024</div>
<svg class="a" style="left:0;top:1030px" width="1920" height="50">
 <!-- start -->
 <path d="M20 18.300 L28.400 17.100 V24.600 H20Z M29.500 17 L40 15.500 V24.600 H29.500Z M20 25.700 H28.400 V33.300 L20 32.100Z M29.500 25.700 H40 V34.800 L29.500 33.400Z" fill="#000"></path>
 <circle cx="88" cy="22.500" r="6.300" fill="none" stroke="#111" stroke-width="1.500"></circle><path d="M83.500 27.200 L75.500 34.300" stroke="#111" stroke-width="1.600"></path>
 <!-- underlines -->
 <g fill="#0a6cc4"><rect x="429" y="47" width="50.500" height="3"></rect><rect x="553" y="47" width="50.500" height="3"></rect><rect x="801" y="47" width="50.500" height="3"></rect><rect x="858" y="47" width="60.500" height="3"></rect><rect x="925" y="47" width="51" height="3"></rect></g>
 <!-- edge -->
 <defs><linearGradient id="edg" x1="0" y1="0" x2="1" y2="1"><stop offset="0" stop-color="#35c1f1"></stop><stop offset=".6" stop-color="#1b8ad8"></stop><stop offset="1" stop-color="#0c59a4"></stop></linearGradient><linearGradient id="edg2" x1="0" y1="0" x2="1" y2="0"><stop offset="0" stop-color="#2bc3d2"></stop><stop offset="1" stop-color="#6fdc4e"></stop></linearGradient>
 <linearGradient id="mag" x1="0" y1="0" x2="1" y2="1"><stop offset="0" stop-color="#2a4ae0"></stop><stop offset="1" stop-color="#7a3fe0"></stop></linearGradient></defs>
 <circle cx="454" cy="24.300" r="15.700" fill="url(#edg)"></circle>
 <path d="M438.500 22 Q440 9 454 8.600 Q468 9 469.700 22 Q469 28 462 28.500 Q464 25 462 21 Q458 16 452 17 Q445 18 438.500 22Z" fill="url(#edg2)"></path>
 <path d="M452 21.500 Q447 26 450 32 Q454 37 462 35 Q456 39 450 37.500 Q443 34 443.500 27 Q445 22 452 21.500Z" fill="#0b4f98"></path>
 <path d="M453 22 Q459 21 461 25 Q462 28 458.500 28.500 Q455 28 453 22Z" fill="#f1e7d9"></path>
 <!-- mail -->
 <path d="M501 22 L516 10.500 L531 22 V40 H501Z" fill="#1565b8"></path><path d="M504 19 H528 V34 H504Z" fill="#fff"></path><path d="M501 22 L516 31.500 L531 22 V40 H501Z" fill="#2ea3ea"></path><path d="M501 40 L516 30 L531 40Z" fill="#1b84d6"></path>
 <!-- yandex browser -->
 <circle cx="577.700" cy="25.300" r="15.200" fill="#fff"></circle><path d="M569.500 16 L577.700 26.500 L586 16 M577.700 26.500 V37" fill="none" stroke="#e8222a" stroke-width="3.600"></path>
 <!-- yandex -->
 <circle cx="640" cy="25" r="15.200" fill="#f02a20"></circle><path d="M643 34 V16 H639 Q634.500 16.500 634.500 21 Q634.500 25.500 639.500 25.700 H643 M639.500 25.700 L634.500 34" fill="none" stroke="#fff" stroke-width="2.700"></path>
 <!-- MA -->
 <rect x="686.800" y="10.200" width="30.200" height="29.800" fill="url(#mag)"></rect><path d="M691.500 33 L699.500 17 H702.500 L694.500 33Z M698.500 33 L706.500 17 H711 V33 H707.800 V23 L702 33Z" fill="#fff" fill-opacity=".92"></path>
 <!-- explorer -->
 <path d="M750 15 Q750 13 752 13 H760 L763 16 H776 Q778 16 778 18 V37 H750Z" fill="#f0b62c"></path><rect x="750" y="19" width="28" height="18" rx="1" fill="#fcd462"></rect><path d="M755 37 V28 H773 V37 H768.500 V32 H759.500 V37Z" fill="#2a86d4"></path>
 <!-- winrar -->
 <rect x="811" y="10" width="30" height="9.500" rx="1.500" fill="#c23a3a"></rect><rect x="811" y="19.500" width="30" height="9.500" rx="1.500" fill="#3a55b8"></rect><rect x="811" y="29" width="30" height="10.500" rx="1.500" fill="#2f8a3a"></rect><rect x="822.500" y="9" width="7.500" height="31" fill="#d8a838"></rect><rect x="820.500" y="20" width="11.500" height="8.500" rx="1.500" fill="#f0d890" stroke="#5a4010" stroke-width="1.200"></rect><path d="M811 14 h30 M811 24 h9 M832 24 h9 M811 34 h30" stroke="#000" stroke-opacity=".25" stroke-width="1"></path>
 <!-- powerpoint -->
 <path d="M885 12.500 H900 Q902 12.500 902 14.500 V35.500 Q902 37.500 900 37.500 H885Z" fill="#fff" stroke="#d24625" stroke-width="1.600"></path><circle cx="895.500" cy="19.500" r="3.200" fill="none" stroke="#d24625" stroke-width="1.300"></circle><path d="M890.500 27 H899 M890.500 31 H899" stroke="#d24625" stroke-width="1.500"></path>
 <path d="M874 11.500 L891 8.500 V41.500 L874 38.500Z" fill="#d24625"></path><path d="M879.500 32 V18 H884 Q887.500 18.200 887.500 22 Q887.500 26 884 26.200 H879.500" fill="none" stroke="#fff" stroke-width="2.500"></path>
 <!-- camera app -->
 <rect x="935" y="10" width="30" height="30" rx="6.500" fill="#1d2326"></rect><circle cx="945.500" cy="25" r="6" fill="none" stroke="#fff" stroke-width="1.400"></circle><circle cx="943.800" cy="23" r="1.200" fill="#fff"></circle><circle cx="958" cy="25" r="2.500" fill="#2ee62e"></circle>
 <!-- tray -->
 <path d="M1550.500 29 L1558.400 20.800 L1566.300 29" fill="none" stroke="#111" stroke-width="1.600"></path>
 <g fill="none" stroke="#111" stroke-width="1.400"><rect x="1582.300" y="19.500" width="9" height="11" rx="1.500"></rect><path d="M1591.500 23.500 L1595.500 21 V29 L1591.500 26.500"></path><path d="M1584 17 Q1587 15.500 1590 17 M1584 33 Q1587 34.500 1590 33" stroke-width="1.100"></path></g>
 <rect x="1613.800" y="14.800" width="8.400" height="14" rx="3" fill="#111"></rect><path d="M1612 25.500 Q1612 31.300 1618 31.300 Q1624 31.300 1624 25.500 M1618 31.300 V34.200 M1614.500 34.200 H1621.500" fill="none" stroke="#111" stroke-width="1.300"></path>
 <rect x="1643" y="20.500" width="14.300" height="9.500" fill="none" stroke="#111" stroke-width="1.400"></rect><rect x="1645" y="22.500" width="10.300" height="5.500" fill="#111"></rect><rect x="1657.500" y="23.300" width="1.500" height="4" fill="#111"></rect><path d="M1638 21.500 h3.500 v3 h-3.500z M1639 19 v2.500 M1640.600 19 v2.500 M1639.800 24.500 V27.500 H1643" fill="none" stroke="#111" stroke-width="1.100"></path>
 <g fill="none" stroke="#111" stroke-width="1.400"><path d="M1672 30 A13.500 13.500 0 0 1 1685 17.800"></path><path d="M1675.500 31 A10 10 0 0 1 1686 21.500"></path><path d="M1679.200 32 A6.500 6.500 0 0 1 1686.800 25.300"></path></g><circle cx="1685.300" cy="31.500" r="1.500" fill="#111"></circle>
 <g fill="none" stroke="#111" stroke-width="1.300"><path d="M1698.800 22 H1702 L1706 18 V32 L1702 28 H1698.800Z"></path><path d="M1708.800 22 Q1710.500 25 1708.800 28 M1711.500 19.800 Q1714.500 25 1711.500 30.300 M1714.500 17.500 Q1718.500 25 1714.500 32.500"></path></g>
 <path d="M1869.600 15 H1888.700 V29.500 H1877 L1873.500 33 V29.500 H1869.600Z" fill="#000"></path><path d="M1872.500 19 H1885.500 M1872.500 22.300 H1885.500 M1872.500 25.600 H1882" stroke="#f0e8dc" stroke-width="1.100"></path>
 <circle cx="1888.300" cy="35" r="9.500" fill="#cfcac2" stroke="#a8a49c" stroke-width="1"></circle>
 <rect x="1914" y="0" width="1" height="50" fill="#b8b2a8"></rect>
</svg>
<div class="t" style="left:1884.200px;top:1058.300px;font-size:14.500px;color:#111;">2</div>
<!--/BT-->


</body></html>
